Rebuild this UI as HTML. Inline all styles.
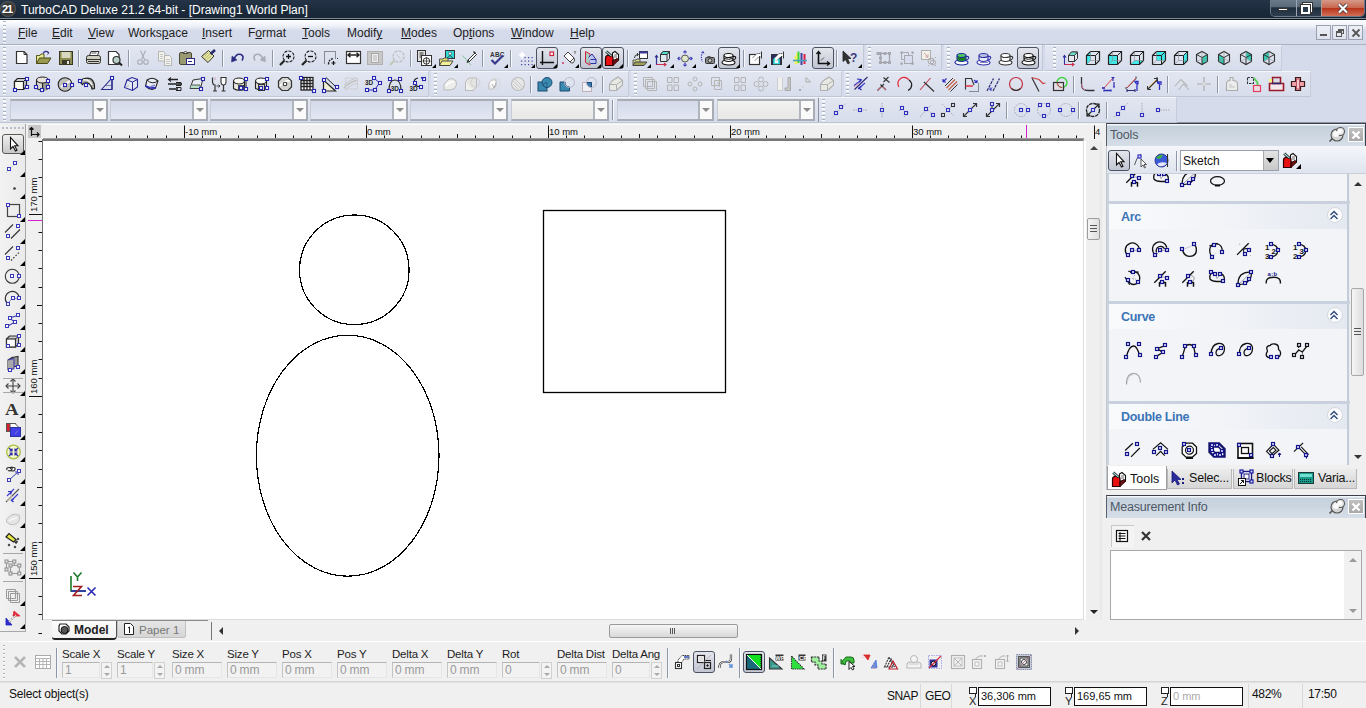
<!DOCTYPE html>
<html><head><meta charset="utf-8"><style>*{margin:0;padding:0;box-sizing:border-box}
html,body{width:1366px;height:708px;overflow:hidden;background:#f0f0f0;font-family:"Liberation Sans",sans-serif;font-size:12px;color:#000}
body{position:relative}
div,span,svg{position:absolute}
svg{overflow:visible}
.t{white-space:nowrap;line-height:1.15}
.menu{top:27px;font-size:12px;color:#1e1e1e}
.menu u{text-decoration:underline;text-underline-offset:1px}
.bar{background:linear-gradient(#e2e6f1,#d8ddec);border-top:1px solid #f5f6fb;border-bottom:1px solid #bfc6d6;border-right:1px solid #c6ccda}
.grip{width:3px;background:repeating-linear-gradient(#aab2c2 0 1.5px,#fcfdff 1.5px 3px,transparent 3px 4px);clip-path:polygon(0 0,100% 0,100% 100%,0 100%)}
.sep{width:2px;border-left:1px solid #8e97a8;border-right:1px solid #f8f9fd}
.press{border:1px solid #4c5262;border-radius:3px;background:linear-gradient(#e4e6ed,#c2c6d2)}
.combo{height:22px;border:2px solid #a8acb5;border-left:1px solid #c8ccd4;background:linear-gradient(#d3d9ea,#e3e7f3)}
.combo.l{background:linear-gradient(#f2f2f0,#e8e8e8)}
.cbtn{right:0;top:0;width:14px;height:18px;background:#fafafa;border-left:2px solid #b0b4bc}
.cbtn:after{content:"";position:absolute;left:2px;top:7px;border-left:4px solid transparent;border-right:4px solid transparent;border-top:4px solid #8c8c8c}
.tri{width:0;height:0;border-left:5px solid transparent;border-bottom:5px solid #000}
.rl{font-size:9.5px;color:#111;line-height:12px;margin-top:0.5px}
.sect{left:1107px;width:242px;background:#f2f4f8;border-left:2px solid #cdd4de;border-right:2px solid #c4ccd8}
.sh{left:0;top:0;width:238px;height:25px;background:linear-gradient(90deg,#f9fafc 0,#f2f4f8 45%,#e4e8f0 100%)}
.sh span{left:12px;top:6px;font-size:12.5px;font-weight:bold;color:#3b74b7;letter-spacing:-0.3px}
.cbut{left:218px;top:3px;width:16px;height:16px;border-radius:8px;background:#fbfcfd;border:1px solid #d4d8de}
.ptitle{background:linear-gradient(#f4f7fa 0,#f4f7fa 1px,#c4d0dc 2px,#d6dee8 100%);border-top:1px solid #3a3f48;border-left:1px solid #5a6068;border-right:1px solid #3a3f48}
.ptitle span{left:3px;top:4px;font-size:12.5px;color:#4e5866;letter-spacing:-0.2px}
.lbl{font-size:11.5px;color:#1e1e1e;top:648px;letter-spacing:-0.2px}
.inp{top:662px;height:16px;border:1px solid #e6e6e6;border-top-color:#b4b4b4;border-left-color:#c4c4c4;background:#f2f2f2;color:#9a9a9a;font-size:12px}
.inp span{left:2px;top:1px;letter-spacing:-0.2px}
.spin{top:662px;width:11px;height:17px;border:1px solid #d0d0d0;background:#f3f3f3}
</style></head><body>
<div style="left:0;top:0;width:1366px;height:20px;background:linear-gradient(#243446,#1b2a3b 60%,#172535);border-bottom:1px solid #0c141c"></div>
<div style="left:0;top:18px;width:1366px;height:1px;background:#7a8a98"></div>
<div style="left:0px;top:1px;width:16px;height:16px;border-radius:8px;background:radial-gradient(#2a2a2a 0,#3a3a3a 55%,#666 75%,#2a3040 100%)"></div>
<span class="t" style="left:2px;top:3px;font-size:11px;font-weight:bold;color:#fff;letter-spacing:-1.2px">21</span>
<span class="t" style="left:21px;top:4px;font-size:12px;color:#fff">TurboCAD Deluxe 21.2 64-bit - [Drawing1 World Plan]</span>
<div style="left:1270px;top:-1px;width:95px;height:18px;border:1px solid #6c7888;border-top:none;border-radius:0 0 5px 5px;overflow:hidden"><div style="left:0;top:0;width:25px;height:17px;background:linear-gradient(#6e7e8c,#5a6a78 45%,#1e2e3e 52%,#2e3e50)"></div><div style="left:25px;top:0;width:25px;height:17px;border-left:1px solid #9aa6b2;background:linear-gradient(#6e7e8c,#5a6a78 45%,#1e2e3e 52%,#2e3e50)"></div><div style="left:50px;top:0;width:44px;height:17px;border-left:1px solid #b0a09a;background:linear-gradient(#d8a090,#c86850 50%,#b8341a 55%,#d07058)"></div></div>
<div style="left:1278px;top:8px;width:10px;height:3px;background:#fff;border:1px solid #333"></div>
<div style="left:1303px;top:3px;width:9px;height:9px;border:2px solid #fff;box-shadow:0 0 0 1px #333"></div><div style="left:1301px;top:5px;width:9px;height:9px;border:2px solid #fff;background:#2a3a4a;box-shadow:0 0 0 1px #333"></div>
<svg style="left:1337px;top:3px" width="12" height="11" viewBox="0 0 12 11"><path d="M2 1.5L10 9.5M10 1.5L2 9.5" stroke="#333" stroke-width="3.6"/><path d="M2 1.5L10 9.5M10 1.5L2 9.5" stroke="#fff" stroke-width="2.2"/></svg>
<div style="left:0;top:20px;width:1366px;height:25px;background:linear-gradient(#fdfeff 0,#eef1f8 25%,#d5dbeb 45%,#d4daea 100%);border-bottom:1px solid #a9b0be"></div>
<span class="t menu" style="left:18px"><u>F</u>ile</span>
<span class="t menu" style="left:52px"><u>E</u>dit</span>
<span class="t menu" style="left:88px"><u>V</u>iew</span>
<span class="t menu" style="left:128px">Works<u>p</u>ace</span>
<span class="t menu" style="left:202px"><u>I</u>nsert</span>
<span class="t menu" style="left:248px">F<u>o</u>rmat</span>
<span class="t menu" style="left:302px"><u>T</u>ools</span>
<span class="t menu" style="left:347px">Modif<u>y</u></span>
<span class="t menu" style="left:401px"><u>M</u>odes</span>
<span class="t menu" style="left:453px">Op<u>t</u>ions</span>
<span class="t menu" style="left:511px"><u>W</u>indow</span>
<span class="t menu" style="left:570px"><u>H</u>elp</span>
<div class="grip" style="left:3px;top:21px;height:22px"></div>
<div style="left:1316px;top:25px;width:15px;height:15px;border:1px solid #9aa0ae;background:linear-gradient(#eef0f6,#dde2ee)"></div>
<div style="left:1332px;top:25px;width:15px;height:15px;border:1px solid #9aa0ae;background:linear-gradient(#eef0f6,#dde2ee)"></div>
<div style="left:1348px;top:25px;width:15px;height:15px;border:1px solid #9aa0ae;background:linear-gradient(#eef0f6,#dde2ee)"></div>
<div style="left:1320px;top:34px;width:7px;height:2px;background:#555"></div>
<div style="left:1338px;top:29px;width:6px;height:5px;border:1px solid #555;border-top-width:2px"></div><div style="left:1336px;top:31px;width:6px;height:6px;border:1px solid #555;border-top-width:2px;background:#e6e9f2"></div>
<svg style="left:1351px;top:28px" width="10" height="10" viewBox="0 0 10 10"><path d="M1.5 1.5L8.5 8.5M8.5 1.5L1.5 8.5" stroke="#555" stroke-width="1.8"/></svg>
<div style="left:0;top:45px;width:1366px;height:78px;background:#d6dbeb;border-bottom:1px solid #8d96a6"></div>
<div class="bar" style="left:0;top:45px;width:1282px;height:26px"></div>
<div class="bar" style="left:0;top:71px;width:429px;height:26px"></div>
<div class="bar" style="left:431px;top:71px;width:198px;height:26px"></div>
<div class="bar" style="left:631px;top:71px;width:211px;height:26px"></div>
<div class="bar" style="left:844px;top:71px;width:467px;height:26px"></div>
<div class="bar" style="left:0;top:97px;width:819px;height:26px"></div>
<div class="bar" style="left:819px;top:97px;width:358px;height:26px"></div>
<div class="grip" style="left:3px;top:47px;height:22px"></div>
<div class="grip" style="left:3px;top:73px;height:22px"></div>
<div class="grip" style="left:3px;top:99px;height:22px"></div>
<div class="press" style="left:536px;top:47px;width:22px;height:22px"></div>
<div class="press" style="left:580px;top:47px;width:22px;height:22px"></div>
<div class="press" style="left:602px;top:47px;width:22px;height:22px"></div>
<div class="press" style="left:718px;top:47px;width:22px;height:22px"></div>
<div class="press" style="left:812px;top:47px;width:22px;height:22px"></div>
<div class="press" style="left:1017px;top:47px;width:22px;height:22px"></div>
<div class="sep" style="left:78px;top:50px;height:17px"></div>
<div class="sep" style="left:128px;top:50px;height:17px"></div>
<div class="sep" style="left:222px;top:50px;height:17px"></div>
<div class="sep" style="left:272px;top:50px;height:17px"></div>
<div class="sep" style="left:410px;top:50px;height:17px"></div>
<div class="sep" style="left:482px;top:50px;height:17px"></div>
<div class="sep" style="left:510px;top:50px;height:17px"></div>
<div class="sep" style="left:627px;top:50px;height:17px"></div>
<div class="sep" style="left:743px;top:50px;height:17px"></div>
<div class="sep" style="left:836px;top:50px;height:17px"></div>
<svg style="left:13px;top:50px" width="16" height="16" viewBox="0 0 16 16"><path d="M3.5 1.5H11L14 4.5V13.5H3.5Z" fill="#fff" stroke="#333" stroke-width="1.2" /><path d="M11 1.5V4.5H14" fill="none" stroke="#333" stroke-width="1" /></svg>
<svg style="left:35px;top:50px" width="16" height="16" viewBox="0 0 16 16"><path d="M1.5 13.5V5.5H5L6 4H9V13.5Z" fill="#e8e890" stroke="#5a5a20" stroke-width="1" /><path d="M1.5 13.5L4.5 8H16L12.5 13.5Z" fill="#9a9a50" stroke="#4a4a18" stroke-width="1" /><path d="M8 3.5Q10 0 13.5 2.5" fill="none" stroke="#3a3a8a" stroke-width="1.3" /><path d="M11.5 1.5L14 2.8L12.5 4.5" fill="none" stroke="#3a3a8a" stroke-width="1" /></svg>
<svg style="left:58px;top:50px" width="16" height="16" viewBox="0 0 16 16"><rect x="1.5" y="1.5" width="13" height="13" fill="#8c8c50" stroke="#3a3a20"/><rect x="3.5" y="2" width="9" height="6" fill="#d8d8c0"/><rect x="4" y="10" width="8" height="4.5" fill="#3a3a28"/><rect x="9" y="11" width="2" height="3" fill="#e8e8d8"/></svg>
<svg style="left:85px;top:50px" width="16" height="16" viewBox="0 0 16 16"><path d="M4.5 5.5L6 1.5H14L12.5 5.5" fill="#fff" stroke="#333" stroke-width="1" /><rect x="1.5" y="5.5" width="14" height="8" rx="2" fill="#d0d0c0" stroke="#333"/><path d="M1.5 9.5H15.5M3 11.5H14" fill="none" stroke="#333" stroke-width="1" /><path d="M6.5 3H11.5" fill="none" stroke="#333" stroke-width="0.8" /></svg>
<svg style="left:107px;top:50px" width="16" height="16" viewBox="0 0 16 16"><path d="M1.5 1.5H9L12 4.5V14.5H1.5Z" fill="#fff" stroke="#333" stroke-width="1.2" /><circle cx="9.5" cy="10" r="3.5" fill="#b8d0c8" stroke="#333" stroke-width="1.2"/><path d="M12 12.5L15 15.5" fill="none" stroke="#222" stroke-width="2" /></svg>
<svg style="left:135px;top:50px" width="16" height="16" viewBox="0 0 16 16"><g stroke="#a8acb8" fill="none" stroke-width="1.1"><path d="M5.5 0.5L9.5 9.5M10.5 0.5L6.5 9.5" fill="none" stroke="#a8acb8" stroke-width="1.1" /><circle cx="5" cy="12" r="2.3"/><circle cx="11" cy="12" r="2.3"/></g></svg>
<svg style="left:157px;top:50px" width="16" height="16" viewBox="0 0 16 16"><path d="M1.5 1.5H6.5L8 3V11H1.5Z" fill="#f2f2ea" stroke="#b5b5b5" stroke-width="1" /><path d="M7.5 5.5H12.5L14.5 7.5V15.5H7.5Z" fill="#f2f2ea" stroke="#b5b5b5" stroke-width="1" /><path d="M3 4.5H6M3 6.5H6M3 8.5H6M9 9.5H13M9 11.5H13M9 13.5H13" fill="none" stroke="#c8c8c8" stroke-width="1" /></svg>
<svg style="left:179px;top:50px" width="16" height="16" viewBox="0 0 16 16"><rect x="0.5" y="2.5" width="12" height="12" rx="1.5" fill="#9a9a72" stroke="#4a4a30"/><path d="M4 3.5L6.5 1L9 3.5Z" fill="#f0f0d8" stroke="#444" stroke-width="1" /><rect x="7.5" y="8.5" width="8" height="6" fill="#fff" stroke="#2a2a80"/><path d="M9 11.5H13" fill="none" stroke="#2a2a80" stroke-width="1" /></svg>
<svg style="left:200px;top:50px" width="16" height="16" viewBox="0 0 16 16"><path d="M1.5 6.5L8.5 0.5L14 6L8 12.5Z" fill="#e8e8a0" stroke="#333" stroke-width="1" /><path d="M3.5 7L8.5 2.5M5 8.5L10 4M6.5 10L11.5 5.5" fill="none" stroke="#a8a870" stroke-width="0.8" /><path d="M10.5 4L15 0" fill="none" stroke="#2a2a6a" stroke-width="2.6" /></svg>
<svg style="left:230px;top:50px" width="16" height="16" viewBox="0 0 16 16"><path d="M4 9.5Q6 3 11 4.5Q14.5 6 12 10.5" fill="none" stroke="#2a2a80" stroke-width="1.6" /><path d="M1.5 12L2 6L7 10Z" fill="#2a2a80" stroke="#2a2a80" stroke-width="0.5" /></svg>
<svg style="left:251px;top:50px" width="16" height="16" viewBox="0 0 16 16"><path d="M12 9.5Q10 3 5 4.5Q1.5 6 4 10.5" fill="none" stroke="#a8acb8" stroke-width="1.6" /><path d="M14.5 12L14 6L9 10Z" fill="#a8acb8" stroke="#a8acb8" stroke-width="0.5" /></svg>
<svg style="left:279px;top:50px" width="16" height="16" viewBox="0 0 16 16"><circle cx="9.5" cy="6.5" r="5.5" fill="none" stroke="#222" stroke-width="1.1" stroke-dasharray="3 1.2"/><path d="M5.5 10.5L1 15" fill="none" stroke="#222" stroke-width="2.2" /><path d="M9.5 4V9M7 6.5H12" fill="none" stroke="#111" stroke-width="1.3" /></svg>
<svg style="left:301px;top:50px" width="16" height="16" viewBox="0 0 16 16"><circle cx="9.5" cy="6.5" r="5.5" fill="none" stroke="#222" stroke-width="1.1" stroke-dasharray="3 1.2"/><path d="M5.5 10.5L1 15" fill="none" stroke="#222" stroke-width="2.2" /><path d="M7 6.5H12" fill="none" stroke="#111" stroke-width="1.3" /></svg>
<svg style="left:323px;top:50px" width="16" height="16" viewBox="0 0 16 16"><path d="M1.5 13.5V1.5H12.5V9" fill="none" stroke="#333" stroke-width="1" stroke-dasharray="1 1"/><path d="M5.5 14.5Q5.5 9 11 8.5" fill="none" stroke="#222" stroke-width="1.4" stroke-dasharray="2 1"/><path d="M10.5 11V15M8.5 13H12.5" fill="none" stroke="#111" stroke-width="1.2" /><rect x="14" y="8" width="1" height="1" fill="#333"/></svg>
<svg style="left:345px;top:50px" width="16" height="16" viewBox="0 0 16 16"><rect x="1.5" y="1.5" width="14" height="12" fill="#fff" stroke="#333" stroke-width="1.2"/><path d="M3 5H14M5.5 2.8L3 5L5.5 7.2M11.5 2.8L14 5L11.5 7.2" fill="none" stroke="#222" stroke-width="1.4" /></svg>
<svg style="left:367px;top:50px" width="16" height="16" viewBox="0 0 16 16"><rect x="0.5" y="1.5" width="15" height="13" fill="#c8c8c8" stroke="#b0b0b0"/><rect x="4.5" y="3.5" width="7" height="9" fill="#ececec" stroke="#aaa"/><path d="M6 6H10M6 8H10M6 10H10" fill="none" stroke="#aaa" stroke-width="0.8" /></svg>
<svg style="left:389px;top:50px" width="16" height="16" viewBox="0 0 16 16"><circle cx="9.5" cy="6.5" r="5.5" fill="none" stroke="#b8b8b8" stroke-width="1.1" stroke-dasharray="3 1.2"/><path d="M5.5 10.5L1 15" fill="none" stroke="#c0c8b8" stroke-width="2" /><path d="M7.5 4.5L11.5 8.5" fill="none" stroke="#c0c0c0" stroke-width="1" /></svg>
<svg style="left:417px;top:50px" width="16" height="16" viewBox="0 0 16 16"><rect x="0.5" y="0.5" width="8" height="11" fill="#e0e0e0" stroke="#333"/><path d="M2.5 3H6.5M2.5 5H6.5M2.5 7H6.5" fill="none" stroke="#333" stroke-width="1" /><rect x="4.5" y="5.5" width="10" height="10" fill="#fff" stroke="#333"/><circle cx="9.5" cy="11" r="3.2" fill="none" stroke="#333"/><path d="M9.5 7V15M5.5 11H13.5" fill="none" stroke="#333" stroke-width="0.8" /></svg>
<svg style="left:439px;top:50px" width="16" height="16" viewBox="0 0 16 16"><rect x="6.5" y="0.5" width="9" height="8" fill="#30d8d8" stroke="#333"/><circle cx="11" cy="3.5" r="1.5" fill="#fff" stroke="#333" stroke-width="0.6"/><path d="M8 8L11 5.5L14 8" fill="none" stroke="#333" stroke-width="0.8" /><path d="M0.5 15.5V9H4L5 8H9V15.5Z" fill="#e8e070" stroke="#555" stroke-width="1" /><path d="M0.5 15.5L3 11H14L11 15.5Z" fill="#f4f098" stroke="#444" stroke-width="1" /></svg>
<svg style="left:461px;top:50px" width="16" height="16" viewBox="0 0 16 16"><path d="M1.5 5.5L10 15" fill="none" stroke="#80c090" stroke-width="1" /><path d="M7 10L14 3L15.5 4.5L8.5 11.5Z" fill="#fff" stroke="#333" stroke-width="1" /><path d="M7 10L6 12.5L8.5 11.5Z" fill="#333" stroke="#333" stroke-width="0.8" /><path d="M12.5 1.5L14.5 3.5" fill="none" stroke="#333" stroke-width="1.5" /></svg>
<svg style="left:489px;top:50px" width="16" height="16" viewBox="0 0 16 16"><text x="1" y="6.5" font-family="Liberation Sans" font-weight="bold" font-size="6.5" fill="#333" letter-spacing="0.2">ABC</text><path d="M2.5 10L6 13.5L14 5.5" fill="none" stroke="#3a3a8a" stroke-width="2.2" /></svg>
<svg style="left:517px;top:50px" width="16" height="16" viewBox="0 0 16 16"><rect x="4" y="7" width="1.2" height="1.2" fill="#4040a0"/><rect x="4" y="10.5" width="1.2" height="1.2" fill="#4040a0"/><rect x="4" y="14" width="1.2" height="1.2" fill="#4040a0"/><rect x="7.5" y="7" width="1.2" height="1.2" fill="#4040a0"/><rect x="7.5" y="10.5" width="1.2" height="1.2" fill="#4040a0"/><rect x="7.5" y="14" width="1.2" height="1.2" fill="#4040a0"/><rect x="11" y="7" width="1.2" height="1.2" fill="#4040a0"/><rect x="11" y="10.5" width="1.2" height="1.2" fill="#4040a0"/><rect x="11" y="14" width="1.2" height="1.2" fill="#4040a0"/><rect x="14.5" y="7" width="1.2" height="1.2" fill="#4040a0"/><rect x="14.5" y="10.5" width="1.2" height="1.2" fill="#4040a0"/><rect x="14.5" y="14" width="1.2" height="1.2" fill="#4040a0"/><path d="M1 5H9M5 1V9" fill="none" stroke="#e8e8f8" stroke-width="2" /><path d="M2 5L5 2L8 5L5 8Z" fill="#fff" stroke="#f6f6fc" stroke-width="0.5" /></svg>
<svg style="left:539px;top:50px" width="16" height="16" viewBox="0 0 16 16"><path d="M3.5 1V15M1 12.5H15" fill="none" stroke="#111" stroke-width="1.4" /><path d="M5 4.5H13M5 6.5H13" fill="none" stroke="#c8d8e8" stroke-width="0.8" stroke-dasharray="1 1"/><rect x="11" y="2" width="3.5" height="3.5" fill="#fff" stroke="#d02040" stroke-width="1.2"/></svg>
<svg style="left:561px;top:50px" width="16" height="16" viewBox="0 0 16 16"><path d="M3 6L7 2L13 8L9 12Z" fill="#fff" stroke="#444" stroke-width="1" /><path d="M9 12L13 8Q14.5 10 12.5 12.5Q11 14 9 12" fill="#f4f4f4" stroke="#444" stroke-width="1" /><path d="M1 12L3 14M3 12L1 14" fill="none" stroke="#d04060" stroke-width="0.8" /><path d="M13 1L14 2.5L15 1M14 2.5V4" fill="none" stroke="#555" stroke-width="0.7" /></svg>
<svg style="left:583px;top:50px" width="16" height="16" viewBox="0 0 16 16"><path d="M2.5 1.5L7 4V15L2.5 12.5Z" fill="rgba(120,200,160,0.5)" stroke="#d02040" stroke-width="1" /><path d="M5.5 7.5L9 4L13 9.5V13.5H7.5" fill="#b8c8f0" stroke="#3030a0" stroke-width="1" /><path d="M7.5 9.5H13" fill="none" stroke="#3030a0" stroke-width="1" /></svg>
<svg style="left:605px;top:50px" width="16" height="16" viewBox="0 0 16 16"><path d="M7.5 3L10 1.5L13.5 4.5V10H7.5Z" fill="#fff" stroke="#111" stroke-width="1.1" /><path d="M9 5H12M9 7H12" fill="none" stroke="#444" stroke-width="0.8" /><path d="M0.5 15.5V8.5Q0.5 5.5 3.5 5.2H5.5Q8 5.5 8 8.5V15.5Z" fill="#e81010" stroke="#2a0000" stroke-width="1.2" /><path d="M8 15.5L13.8 10L12 8.5L8 11Z" fill="#701010" stroke="#2a0000" stroke-width="1" /><path d="M1.2 1.5L6.5 6.2" fill="none" stroke="#111" stroke-width="2.8" /><path d="M1.2 1.5L6.5 6.2" fill="none" stroke="#a8e8e8" stroke-width="1.1" /></svg>
<svg style="left:632px;top:50px" width="16" height="16" viewBox="0 0 16 16"><rect x="7.5" y="1.5" width="8" height="7" fill="#fff" stroke="#333"/><rect x="7.5" y="1.5" width="8" height="2" fill="#3a3aa0"/><path d="M1 15.5V10H4L5 9H8V15.5Z" fill="#d8d890" stroke="#555" stroke-width="1" /><path d="M1 15.5L3 12H15L12 15.5Z" fill="#a0a058" stroke="#444" stroke-width="1" /><path d="M2.5 8Q2.5 4.5 6 4.5" fill="none" stroke="#333" stroke-width="1" /><path d="M5 3L6.5 4.5L5 6" fill="none" stroke="#333" stroke-width="1" /></svg>
<svg style="left:654px;top:50px" width="16" height="16" viewBox="0 0 16 16"><path d="M6.5 4.5L9 1.5H15.5V8.5L13 11.5H6.5Z" fill="#e0e8f0" stroke="#333" stroke-width="1" /><path d="M6.5 4.5H13V11.5M13 4.5L15.5 1.5" fill="none" stroke="#333" stroke-width="1" /><path d="M6.5 4.5L9 1.5H15.5L13 4.5Z" fill="#50e0d0" stroke="#333" stroke-width="1" /><path d="M2.5 15V6M1 7.5L2.5 5.5L4 7.5" fill="none" stroke="#303090" stroke-width="1.2" /><path d="M2.5 14.5H12M10 13L12 14.5L10 16" fill="none" stroke="#d03050" stroke-width="1.2" /></svg>
<svg style="left:677px;top:50px" width="16" height="16" viewBox="0 0 16 16"><circle cx="8" cy="8.5" r="3.5" fill="#e0e8c8" stroke="#555"/><path d="M8 1V4M8 13V16M1 8.5H4M12 8.5H15" fill="none" stroke="#3a3ab8" stroke-width="1.4" stroke-dasharray="1.5 1"/><path d="M6.5 2.5L8 1L9.5 2.5M6.5 14.5L8 16L9.5 14.5M2.5 7L1 8.5L2.5 10M13.5 7L15 8.5L13.5 10" fill="none" stroke="#3a3ab8" stroke-width="1.2" /></svg>
<svg style="left:699px;top:50px" width="16" height="16" viewBox="0 0 16 16"><rect x="6.5" y="7.5" width="9" height="6" rx="1" fill="#888" stroke="#333"/><circle cx="11" cy="10.5" r="1.8" fill="#ddd" stroke="#333"/><rect x="8.5" y="6" width="3" height="2" fill="#555"/><path d="M4 2Q1 6 3.5 12" fill="none" stroke="#3a3ab8" stroke-width="1.1" stroke-dasharray="1.5 1"/><path d="M2.5 3L4 1.5L5 3.5" fill="none" stroke="#3a3ab8" stroke-width="1" /></svg>
<svg style="left:721px;top:50px" width="16" height="16" viewBox="0 0 16 16"><ellipse cx="7.5" cy="12.5" rx="6.5" ry="2.5" fill="#fff" stroke="#111" stroke-width="1.1"/><path d="M3 5.5V9Q3 11.5 7.5 11.5Q12 11.5 12 9V5.5" fill="#fff" stroke="#111" stroke-width="1.1" /><ellipse cx="7.5" cy="5.5" rx="4.5" ry="2" fill="#fff" stroke="#111" stroke-width="1.1"/><path d="M12 6.5Q15.5 6 14.5 8.5Q13.5 10 12 10" fill="none" stroke="#111" stroke-width="1.1" /><path d="M3 8.5Q7.5 10 12 8.5" fill="none" stroke="#111" stroke-width="1" /></svg>
<svg style="left:748px;top:50px" width="16" height="16" viewBox="0 0 16 16"><rect x="1.5" y="4.5" width="10" height="10" fill="#fff" stroke="#333" stroke-width="1.2"/><path d="M4.5 8L9 3.5H13.5V6.5H11L6.5 11" fill="#fff" stroke="#333" stroke-width="0.9" stroke-dasharray="1 0.7"/><path d="M13.5 1.5V8.5" fill="none" stroke="#333" stroke-width="1" /></svg>
<svg style="left:770px;top:50px" width="16" height="16" viewBox="0 0 16 16"><rect x="1.5" y="4.5" width="10" height="10" fill="#2a2a6a" stroke="#333"/><path d="M3 14.5V9L6.5 6L10 9V14.5Z" fill="#40e0e0" stroke="#333" stroke-width="0.5" /><rect x="5" y="10" width="3" height="3" fill="#fff"/><path d="M4.5 8L9 3.5H13.5V6.5H11L6.5 11" fill="#fff" stroke="#333" stroke-width="0.9" stroke-dasharray="1 0.7"/><path d="M13.5 1.5V8.5" fill="none" stroke="#333" stroke-width="1" /></svg>
<svg style="left:792px;top:50px" width="16" height="16" viewBox="0 0 16 16"><path d="M3.5 6V14M5 3V14" fill="none" stroke="#f0f060" stroke-width="2" /><path d="M6.5 1.5V13" fill="none" stroke="#40d040" stroke-width="2" /><path d="M9.5 3V15" fill="none" stroke="#4040a0" stroke-width="2" /><path d="M12.5 4V14" fill="none" stroke="#e02040" stroke-width="2" /><path d="M1 10.5H15" fill="none" stroke="#40a0c0" stroke-width="1.5" /></svg>
<svg style="left:815px;top:50px" width="16" height="16" viewBox="0 0 16 16"><path d="M3.5 2V13.5H14.5" fill="none" stroke="#111" stroke-width="1.6" /><path d="M1.5 4L3.5 1.5L5.5 4M12 11.5L14.5 13.5L12 15.5" fill="none" stroke="#111" stroke-width="1.4" /><path d="M6 10.5L9 7.5" fill="none" stroke="#333" stroke-width="0.8" /></svg>
<svg style="left:842px;top:50px" width="16" height="16" viewBox="0 0 16 16"><path d="M1 1V11.5L3.5 9.5L6 14L7.5 13L5.5 8.5H9Z" fill="#333" stroke="#222" stroke-width="0.8" /><text x="8" y="11.5" font-family="Liberation Sans" font-weight="bold" font-size="12" fill="#3a3a80">?</text></svg>
<svg style="left:877px;top:50px" width="16" height="16" viewBox="0 0 16 16"><path d="M3.5 3.5H12.5V12.5H3.5Z" fill="none" stroke="#a0a0a8" stroke-width="1.2" /><rect x="2.0" y="2.0" width="3" height="3" fill="#a8a8b0"/><rect x="11.0" y="2.0" width="3" height="3" fill="#a8a8b0"/><rect x="2.0" y="11.0" width="3" height="3" fill="#a8a8b0"/><rect x="11.0" y="11.0" width="3" height="3" fill="#a8a8b0"/><rect x="6.5" y="2.0" width="3" height="3" fill="#a8a8b0"/><rect x="2.0" y="6.5" width="3" height="3" fill="#a8a8b0"/><rect x="-0.5" y="2.0" width="3" height="3" fill="#a8a8b0"/><rect x="6.5" y="11.0" width="3" height="3" fill="#a8a8b0"/></svg>
<svg style="left:899px;top:50px" width="16" height="16" viewBox="0 0 16 16"><path d="M2.5 2.5H9.5V9.5H2.5Z" fill="none" stroke="#a8a8b0" stroke-width="1" /><rect x="5.5" y="5.5" width="8" height="8" fill="#d8dcec" stroke="#a8a8b0"/><rect x="1.5" y="12.5" width="2.2" height="2.2" fill="#a0a0a8"/><rect x="12.5" y="1.5" width="2.2" height="2.2" fill="#a0a0a8"/><rect x="12.5" y="12.5" width="2.2" height="2.2" fill="#a0a0a8"/><rect x="1.5" y="1.5" width="2.2" height="2.2" fill="#a0a0a8"/></svg>
<svg style="left:921px;top:50px" width="16" height="16" viewBox="0 0 16 16"><rect x="0.5" y="0.5" width="9" height="9" fill="#f0f0e8" stroke="#b0b0b0"/><path d="M3 3L7 7M4.5 7H7V4.5" fill="none" stroke="#d0a0a0" stroke-width="1" /><circle cx="10" cy="11" r="3" fill="none" stroke="#aaa"/><circle cx="12" cy="12.5" r="2.5" fill="none" stroke="#aaa"/><rect x="14" y="7" width="1" height="1" fill="#aaa"/><rect x="14" y="15" width="1" height="1" fill="#aaa"/><rect x="7" y="15" width="1" height="1" fill="#aaa"/></svg>
<svg style="left:954px;top:50px" width="16" height="16" viewBox="0 0 16 16"><ellipse cx="7.5" cy="12.5" rx="6.5" ry="2.5" fill="#fff" stroke="#1e2aa0" stroke-width="1.1"/><path d="M3 5.5V9Q3 11.5 7.5 11.5Q12 11.5 12 9V5.5" fill="#1a9a2a" stroke="#1e2aa0" stroke-width="1.1" /><ellipse cx="7.5" cy="5.5" rx="4.5" ry="2" fill="#50c860" stroke="#1e2aa0" stroke-width="1.1"/><path d="M12 6.5Q15.5 6 14.5 8.5Q13.5 10 12 10" fill="none" stroke="#1e2aa0" stroke-width="1.1" /><path d="M4 7Q6 11 11 8" fill="none" stroke="#1a7a1a" stroke-width="2" /></svg>
<svg style="left:976px;top:50px" width="16" height="16" viewBox="0 0 16 16"><ellipse cx="7.5" cy="12.5" rx="6.5" ry="2.5" fill="#fff" stroke="#3030a8" stroke-width="1.1"/><path d="M3 5.5V9Q3 11.5 7.5 11.5Q12 11.5 12 9V5.5" fill="#e8ecf8" stroke="#3030a8" stroke-width="1.1" /><ellipse cx="7.5" cy="5.5" rx="4.5" ry="2" fill="#b8c0e0" stroke="#3030a8" stroke-width="1.1"/><path d="M12 6.5Q15.5 6 14.5 8.5Q13.5 10 12 10" fill="none" stroke="#3030a8" stroke-width="1.1" /><path d="M4 12.5H12" fill="none" stroke="#8888c8" stroke-width="1" /></svg>
<svg style="left:998px;top:50px" width="16" height="16" viewBox="0 0 16 16"><ellipse cx="7.5" cy="12.5" rx="6.5" ry="2.5" fill="#fff" stroke="#333" stroke-width="1.1"/><path d="M3 5.5V9Q3 11.5 7.5 11.5Q12 11.5 12 9V5.5" fill="#fff" stroke="#333" stroke-width="1.1" /><ellipse cx="7.5" cy="5.5" rx="4.5" ry="2" fill="#fff" stroke="#333" stroke-width="1.1"/><path d="M12 6.5Q15.5 6 14.5 8.5Q13.5 10 12 10" fill="none" stroke="#333" stroke-width="1.1" /></svg>
<svg style="left:1021px;top:50px" width="16" height="16" viewBox="0 0 16 16"><ellipse cx="7.5" cy="12.5" rx="6.5" ry="2.5" fill="#fff" stroke="#111" stroke-width="1.1"/><path d="M3 5.5V9Q3 11.5 7.5 11.5Q12 11.5 12 9V5.5" fill="#fff" stroke="#111" stroke-width="1.1" /><ellipse cx="7.5" cy="5.5" rx="4.5" ry="2" fill="#fff" stroke="#111" stroke-width="1.1"/><path d="M12 6.5Q15.5 6 14.5 8.5Q13.5 10 12 10" fill="none" stroke="#111" stroke-width="1.1" /><path d="M3 8.5Q7.5 10 12 8.5" fill="none" stroke="#111" stroke-width="1" /></svg>
<svg style="left:1062px;top:50px" width="16" height="16" viewBox="0 0 16 16"><path d="M6.5 5.5L9.5 2H15.5V8.5L12.5 11.5H6.5Z" fill="#e8e8f0" stroke="#333" stroke-width="1" /><path d="M6.5 5.5H12.5V11.5M12.5 5.5L15.5 2" fill="none" stroke="#333" stroke-width="1" /><path d="M6.5 5.5L9.5 2H15.5L12.5 5.5Z" fill="#70e0d0" stroke="#333" stroke-width="0.8" /><path d="M2.5 15V6M1 7.5L2.5 5.5L4 7.5" fill="none" stroke="#3030a0" stroke-width="1.1" /><path d="M2.5 14.5H12M10 13L12 14.5L10 16" fill="none" stroke="#d03050" stroke-width="1.1" /></svg>
<svg style="left:1085px;top:50px" width="16" height="16" viewBox="0 0 16 16"><path d="M1.5 5.5L5.5 1.5V10.5L1.5 14.5Z" fill="#40e8e8" stroke="none" stroke-width="0" /><path d="M1.5 5.5L5.5 1.5H14.5V10.5L10.5 14.5H1.5Z" fill="none" stroke="#222" stroke-width="1.2" /><path d="M1.5 5.5H10.5V14.5M10.5 5.5L14.5 1.5" fill="none" stroke="#222" stroke-width="1" /><path d="M1.5 14.5L5.5 10.5H14.5M5.5 10.5V1.5" fill="none" stroke="#888" stroke-width="0.6" /></svg>
<svg style="left:1107px;top:50px" width="16" height="16" viewBox="0 0 16 16"><path d="M1.5 5.5H10.5V14.5H1.5Z" fill="#40e8e8" stroke="none" stroke-width="0" /><path d="M1.5 5.5L5.5 1.5H14.5V10.5L10.5 14.5H1.5Z" fill="none" stroke="#222" stroke-width="1.2" /><path d="M1.5 5.5H10.5V14.5M10.5 5.5L14.5 1.5" fill="none" stroke="#222" stroke-width="1" /><path d="M1.5 14.5L5.5 10.5H14.5M5.5 10.5V1.5" fill="none" stroke="#888" stroke-width="0.6" /></svg>
<svg style="left:1129px;top:50px" width="16" height="16" viewBox="0 0 16 16"><path d="M1.5 14.5L5.5 10.5H14.5L10.5 14.5Z" fill="#40e8e8" stroke="none" stroke-width="0" /><path d="M1.5 5.5L5.5 1.5H14.5V10.5L10.5 14.5H1.5Z" fill="none" stroke="#222" stroke-width="1.2" /><path d="M1.5 5.5H10.5V14.5M10.5 5.5L14.5 1.5" fill="none" stroke="#222" stroke-width="1" /><path d="M1.5 14.5L5.5 10.5H14.5M5.5 10.5V1.5" fill="none" stroke="#888" stroke-width="0.6" /></svg>
<svg style="left:1151px;top:50px" width="16" height="16" viewBox="0 0 16 16"><path d="M5.5 1.5H14.5V10.5H5.5Z" fill="#40e8e8" stroke="none" stroke-width="0" /><path d="M1.5 5.5L5.5 1.5H14.5V10.5L10.5 14.5H1.5Z" fill="none" stroke="#222" stroke-width="1.2" /><path d="M1.5 5.5H10.5V14.5M10.5 5.5L14.5 1.5" fill="none" stroke="#222" stroke-width="1" /><path d="M1.5 14.5L5.5 10.5H14.5M5.5 10.5V1.5" fill="none" stroke="#888" stroke-width="0.6" /></svg>
<svg style="left:1173px;top:50px" width="16" height="16" viewBox="0 0 16 16"><path d="M10.5 5.5L14.5 1.5V10.5L10.5 14.5Z" fill="#40e8e8" stroke="none" stroke-width="0" /><path d="M1.5 5.5L5.5 1.5H14.5V10.5L10.5 14.5H1.5Z" fill="none" stroke="#222" stroke-width="1.2" /><path d="M1.5 5.5H10.5V14.5M10.5 5.5L14.5 1.5" fill="none" stroke="#222" stroke-width="1" /><path d="M1.5 14.5L5.5 10.5H14.5M5.5 10.5V1.5" fill="none" stroke="#888" stroke-width="0.6" /></svg>
<svg style="left:1194px;top:50px" width="16" height="16" viewBox="0 0 16 16"><g transform="translate(1,0)"><path d="M7 7.5L12.5 4.5V11.5L7 14.5Z" fill="#38c8b0" stroke="none" stroke-width="0" /><path d="M1.5 4.5L7 1.5L12.5 4.5V11.5L7 14.5L1.5 11.5Z" fill="none" stroke="#333" stroke-width="1.1" /><path d="M1.5 4.5L7 7.5L12.5 4.5M7 7.5V15" fill="none" stroke="#333" stroke-width="1" /><path d="M7 1.5V7.5M1.5 11.5L7 8.5L12.5 11.5" fill="none" stroke="#999" stroke-width="0.6" /></g></svg>
<svg style="left:1216px;top:50px" width="16" height="16" viewBox="0 0 16 16"><g transform="translate(1,0)"><path d="M1.5 4.5L7 7.5V14.5L1.5 11.5Z" fill="#38c8b0" stroke="none" stroke-width="0" /><path d="M1.5 4.5L7 1.5L12.5 4.5V11.5L7 14.5L1.5 11.5Z" fill="none" stroke="#333" stroke-width="1.1" /><path d="M1.5 4.5L7 7.5L12.5 4.5M7 7.5V15" fill="none" stroke="#333" stroke-width="1" /><path d="M7 1.5V7.5M1.5 11.5L7 8.5L12.5 11.5" fill="none" stroke="#999" stroke-width="0.6" /></g></svg>
<svg style="left:1238px;top:50px" width="16" height="16" viewBox="0 0 16 16"><g transform="translate(1,0)"><path d="M7 1.5L12.5 4.5V11.5L7 8.5Z" fill="#38c8b0" stroke="none" stroke-width="0" /><path d="M1.5 4.5L7 1.5L12.5 4.5V11.5L7 14.5L1.5 11.5Z" fill="none" stroke="#333" stroke-width="1.1" /><path d="M1.5 4.5L7 7.5L12.5 4.5M7 7.5V15" fill="none" stroke="#333" stroke-width="1" /><path d="M7 1.5V7.5M1.5 11.5L7 8.5L12.5 11.5" fill="none" stroke="#999" stroke-width="0.6" /></g></svg>
<svg style="left:1261px;top:50px" width="16" height="16" viewBox="0 0 16 16"><g transform="translate(1,0)"><path d="M1.5 4.5L7 1.5V8.5L1.5 11.5Z" fill="#38c8b0" stroke="none" stroke-width="0" /><path d="M1.5 4.5L7 1.5L12.5 4.5V11.5L7 14.5L1.5 11.5Z" fill="none" stroke="#333" stroke-width="1.1" /><path d="M1.5 4.5L7 7.5L12.5 4.5M7 7.5V15" fill="none" stroke="#333" stroke-width="1" /><path d="M7 1.5V7.5M1.5 11.5L7 8.5L12.5 11.5" fill="none" stroke="#999" stroke-width="0.6" /></g></svg>
<div class="tri" style="left:432px;top:64px;border-left-width:4px;border-bottom-width:4px"></div>
<div class="tri" style="left:454px;top:64px;border-left-width:4px;border-bottom-width:4px"></div>
<div class="tri" style="left:504px;top:64px;border-left-width:4px;border-bottom-width:4px"></div>
<div class="tri" style="left:531px;top:64px;border-left-width:4px;border-bottom-width:4px"></div>
<div class="tri" style="left:553px;top:64px;border-left-width:4px;border-bottom-width:4px"></div>
<div class="tri" style="left:575px;top:64px;border-left-width:4px;border-bottom-width:4px"></div>
<div class="tri" style="left:597px;top:64px;border-left-width:4px;border-bottom-width:4px"></div>
<div class="tri" style="left:619px;top:64px;border-left-width:4px;border-bottom-width:4px"></div>
<div class="tri" style="left:647px;top:64px;border-left-width:4px;border-bottom-width:4px"></div>
<div class="tri" style="left:670px;top:64px;border-left-width:4px;border-bottom-width:4px"></div>
<div class="tri" style="left:692px;top:64px;border-left-width:4px;border-bottom-width:4px"></div>
<div class="tri" style="left:713px;top:64px;border-left-width:4px;border-bottom-width:4px"></div>
<div class="tri" style="left:736px;top:64px;border-left-width:4px;border-bottom-width:4px"></div>
<div class="tri" style="left:763px;top:64px;border-left-width:4px;border-bottom-width:4px"></div>
<div class="tri" style="left:786px;top:64px;border-left-width:4px;border-bottom-width:4px"></div>
<div class="tri" style="left:858px;top:64px;border-left-width:4px;border-bottom-width:4px"></div>
<div class="grip" style="left:868px;top:47px;height:22px"></div>
<div class="grip" style="left:947px;top:47px;height:22px"></div>
<div class="grip" style="left:1053px;top:47px;height:22px"></div>
<div style="left:863px;top:45px;width:1px;height:26px;background:#c2c8d6"></div><div style="left:864px;top:45px;width:2px;height:26px;background:#d6dbeb"></div>
<div style="left:941px;top:45px;width:1px;height:26px;background:#c2c8d6"></div><div style="left:942px;top:45px;width:2px;height:26px;background:#d6dbeb"></div>
<div style="left:1042px;top:45px;width:1px;height:26px;background:#c2c8d6"></div><div style="left:1043px;top:45px;width:2px;height:26px;background:#d6dbeb"></div>
<div class="sep" style="left:530px;top:76px;height:17px"></div>
<div class="sep" style="left:602px;top:76px;height:17px"></div>
<div class="sep" style="left:1073px;top:76px;height:17px"></div>
<div class="sep" style="left:1167px;top:76px;height:17px"></div>
<div class="sep" style="left:1217px;top:76px;height:17px"></div>
<div class="grip" style="left:434px;top:73px;height:22px"></div>
<div class="grip" style="left:634px;top:73px;height:22px"></div>
<div class="grip" style="left:846px;top:73px;height:22px"></div>
<svg style="left:13px;top:76px" width="16" height="16" viewBox="0 0 16 16"><path d="M1.5 5.5L4.5 2.5H13.5V10.5L10.5 13.5H1.5Z" fill="#c8ccd0" stroke="#222" stroke-width="1.2" /><path d="M1.5 5.5H10.5V13.5H1.5Z" fill="#fbfbf0" stroke="#222" stroke-width="1.2" /><path d="M10.5 5.5L13.5 2.5" fill="none" stroke="#222" stroke-width="1" /><rect x="0.5" y="12.5" width="3" height="3" fill="#fff" stroke="#2626b0" stroke-width="1.1"/><rect x="12.5" y="1.5" width="3" height="3" fill="#fff" stroke="#2626b0" stroke-width="1.1"/><rect x="12.5" y="9.5" width="3" height="3" fill="#fff" stroke="#2626b0" stroke-width="1.1"/></svg>
<svg style="left:34px;top:76px" width="16" height="16" viewBox="0 0 16 16"><path d="M2.5 4V12.5Q8.5 16 14.5 12.5V4" fill="#d8d8d0" stroke="#222" stroke-width="1.1" /><path d="M8.5 7V14.5Q12 14.5 14.5 12.5V4Q12 7 8.5 7Z" fill="#9a9a90" stroke="none" stroke-width="0" /><ellipse cx="8.5" cy="4" rx="6" ry="3" fill="#e8e4dc" stroke="#222" stroke-width="1.1"/><path d="M8.5 7V14.5" fill="none" stroke="#222" stroke-width="1.1" /><rect x="0.5" y="9.5" width="3" height="3" fill="#fff" stroke="#2626b0" stroke-width="1.1"/><rect x="6.5" y="12.5" width="3" height="3" fill="#fff" stroke="#2626b0" stroke-width="1.1"/><rect x="12.5" y="3.5" width="3" height="3" fill="#fff" stroke="#2626b0" stroke-width="1.1"/><rect x="12.5" y="9.5" width="3" height="3" fill="#fff" stroke="#2626b0" stroke-width="1.1"/></svg>
<svg style="left:57px;top:76px" width="16" height="16" viewBox="0 0 16 16"><circle cx="8" cy="8.5" r="6.8" fill="#c0c0b8" stroke="#222" stroke-width="1.1"/><path d="M4 11Q8 8 13 5" fill="none" stroke="#f4f4f4" stroke-width="2.5" /><rect x="6.5" y="7.5" width="3" height="3" fill="#fff" stroke="#2626b0" stroke-width="1.1"/><rect x="13.5" y="7.5" width="3" height="3" fill="#fff" stroke="#2626b0" stroke-width="1.1"/></svg>
<svg style="left:79px;top:76px" width="16" height="16" viewBox="0 0 16 16"><path d="M0.5 5.5Q6 0.5 12 3Q16 6 15.5 12.5L13 13Q12 8 8.5 7Q5 6.5 3.5 8.5Z" fill="#a8a8a0" stroke="#222" stroke-width="1.2" /><path d="M4 4Q10 2.5 13 9" fill="none" stroke="#f4f4f4" stroke-width="1.6" /><rect x="-0.5" y="3.5" width="3" height="3" fill="#fff" stroke="#2626b0" stroke-width="1.1"/><rect x="5.5" y="7.5" width="3" height="3" fill="#fff" stroke="#2626b0" stroke-width="1.1"/></svg>
<svg style="left:101px;top:76px" width="16" height="16" viewBox="0 0 16 16"><path d="M0.5 13.5L11 2V13.5Z" fill="#d8e0f0" stroke="#2a2a8a" stroke-width="1.1" /><path d="M5 9.5H11" fill="none" stroke="#6a6aa0" stroke-width="0.8" /><path d="M11 2L11 13.5" fill="none" stroke="#2a2a8a" stroke-width="1.2" /><rect x="9.5" y="0.5" width="3" height="3" fill="#fff" stroke="#2626b0" stroke-width="1.1"/></svg>
<svg style="left:123px;top:76px" width="16" height="16" viewBox="0 0 16 16"><path d="M1.5 11.5L4 4L9 1.5L14.5 3.5V11L9.5 14.5Z" fill="#e4e8f0" stroke="#2a2a9a" stroke-width="1.1" /><path d="M4 4L9.5 6V14.5M9.5 6L14.5 3.5" fill="none" stroke="#2a2a9a" stroke-width="1" /><path d="M2 12L6 9" fill="none" stroke="#999" stroke-width="0.6" /></svg>
<svg style="left:144px;top:76px" width="16" height="16" viewBox="0 0 16 16"><path d="M3 4Q9 0 14 5L11.5 12Q7 15.5 1.5 10Z" fill="#e8ecf4" stroke="#222" stroke-width="1.1" /><path d="M3 4Q8 9 14 5" fill="none" stroke="#222" stroke-width="1" /><path d="M1.5 10Q6 12.5 11.5 12" fill="none" stroke="#3030c0" stroke-width="2" /><path d="M6 11L11 9" fill="none" stroke="#8888cc" stroke-width="1.5" /></svg>
<svg style="left:167px;top:76px" width="16" height="16" viewBox="0 0 16 16"><path d="M2 3.5H11M1 8H15M2 13H11" fill="none" stroke="#222" stroke-width="1.6" /><path d="M4 1.5L1.5 3.5L4 5.5" fill="none" stroke="#222" stroke-width="1.1" /><path d="M9 6.5H14V9.5H9M9 11.5H14V14.5H9" fill="none" stroke="#222" stroke-width="1" /></svg>
<svg style="left:189px;top:76px" width="16" height="16" viewBox="0 0 16 16"><path d="M1 12.5L4 4L14 2.5L11.5 12.5Z" fill="#e8ecf4" stroke="#333" stroke-width="1" /><path d="M3 9H11L11.5 12.5H1" fill="#b8e0c8" stroke="#333" stroke-width="0.8" /><rect x="12.5" y="1.5" width="3" height="3" fill="#fff" stroke="#2626b0" stroke-width="1.1"/><rect x="10.5" y="11.5" width="3" height="3" fill="#fff" stroke="#2626b0" stroke-width="1.1"/></svg>
<svg style="left:211px;top:76px" width="16" height="16" viewBox="0 0 16 16"><path d="M1.5 1.5V5Q1.5 9 4 9V15M2 15H6" fill="none" stroke="#333" stroke-width="1.2" /><path d="M4 1.5V4" fill="none" stroke="#c06080" stroke-width="1" stroke-dasharray="1 1"/><path d="M10 1.5H15V5.5Q15 9 12.5 9Q10 9 10 5.5Z" fill="#fff" stroke="#333" stroke-width="1.1" /><path d="M12.5 9V15M10.5 15H14.5" fill="none" stroke="#333" stroke-width="1.2" /><path d="M5.5 10H9M7.5 8.5L9 10L7.5 11.5" fill="none" stroke="#333" stroke-width="0.9" /></svg>
<svg style="left:232px;top:76px" width="16" height="16" viewBox="0 0 16 16"><path d="M1.5 5V12.5Q7 16 12.5 12.5V5" fill="#e8e8e0" stroke="#222" stroke-width="1.1" /><ellipse cx="7" cy="5" rx="5.5" ry="3" fill="#f8f8f0" stroke="#222" stroke-width="1.1"/><rect x="6.5" y="9.5" width="5" height="4.5" fill="#c8c8b8" stroke="#444"/><path d="M14 3V13" fill="none" stroke="#222" stroke-width="1" /><rect x="12.5" y="1.5" width="3" height="3" fill="#fff" stroke="#2626b0" stroke-width="1.1"/><rect x="12.5" y="11.5" width="3" height="3" fill="#fff" stroke="#2626b0" stroke-width="1.1"/><rect x="7.5" y="10.5" width="3" height="3" fill="#fff" stroke="#2626b0" stroke-width="1.1"/></svg>
<svg style="left:254px;top:76px" width="16" height="16" viewBox="0 0 16 16"><path d="M1.5 5V12.5Q7 15 12.5 12.5V5" fill="#e0e0d8" stroke="#222" stroke-width="1.1" /><ellipse cx="7" cy="5" rx="5.5" ry="3" fill="#f8f8f4" stroke="#222" stroke-width="1.1"/><rect x="4.5" y="8.5" width="6" height="6" fill="#d0d0c0" stroke="#333"/><path d="M12.5 3V12" fill="none" stroke="#222" stroke-width="1" /><rect x="11.5" y="1.5" width="3" height="3" fill="#fff" stroke="#2626b0" stroke-width="1.1"/><rect x="11.5" y="10.5" width="3" height="3" fill="#fff" stroke="#2626b0" stroke-width="1.1"/><rect x="5.5" y="10.5" width="3" height="3" fill="#fff" stroke="#2626b0" stroke-width="1.1"/></svg>
<svg style="left:277px;top:76px" width="16" height="16" viewBox="0 0 16 16"><path d="M5 1.5H11L14.5 5V11L11 14.5H5L1.5 11V5Z" fill="#d4d4d0" stroke="#333" stroke-width="1.2" /><path d="M3 10Q8 4 13 5" fill="none" stroke="#fff" stroke-width="1.5" /><circle cx="8" cy="8" r="1.8" fill="#fff" stroke="#333" stroke-width="1.1"/></svg>
<svg style="left:299px;top:76px" width="16" height="16" viewBox="0 0 16 16"><rect x="2" y="1.5" width="12" height="12.5" fill="#fff" stroke="#222" stroke-width="1.3"/><path d="M5 1.5V14M8 1.5V14M11 1.5V14M2 4.5H14M2 7.5H14M2 10.5H14" fill="none" stroke="#222" stroke-width="1.3" /><rect x="0.5" y="0.5" width="3" height="3" fill="#fff" stroke="#2626b0" stroke-width="1.1"/><rect x="13.5" y="13.5" width="3" height="3" fill="#fff" stroke="#2626b0" stroke-width="1.1"/></svg>
<svg style="left:322px;top:76px" width="16" height="16" viewBox="0 0 16 16"><path d="M1.5 4V15H13.5Z" fill="#f0f0d8" stroke="#222" stroke-width="1.2" /><path d="M4 1.5L13.5 10.5" fill="none" stroke="#222" stroke-width="1" /><rect x="0.5" y="2.5" width="3" height="3" fill="#fff" stroke="#2626b0" stroke-width="1.1"/><rect x="0.5" y="13.5" width="3" height="3" fill="#fff" stroke="#2626b0" stroke-width="1.1"/><rect x="13.5" y="9.5" width="3" height="3" fill="#fff" stroke="#2626b0" stroke-width="1.1"/></svg>
<svg style="left:343px;top:76px" width="16" height="16" viewBox="0 0 16 16"><path d="M1 12Q6 6 15 4" fill="none" stroke="#c0c0c0" stroke-width="1.5" /><path d="M2 14Q8 8 15 7M1 9Q6 4 13 2" fill="none" stroke="#c8c8c8" stroke-width="1" /><rect x="2.5" y="2" width="12" height="11" fill="none" stroke="#d0d0d4"/></svg>
<svg style="left:365px;top:76px" width="16" height="16" viewBox="0 0 16 16"><text x="0" y="9" font-family="Liberation Sans" font-weight="bold" font-size="7.5" fill="#222" transform="scale(0.85 1)">3D</text><path d="M9 2L14.5 7L9.5 14H2" fill="none" stroke="#2a2ab8" stroke-width="1" /><rect x="7.5" y="0.5" width="3" height="3" fill="#fff" stroke="#2626b0" stroke-width="1.1"/><rect x="13.5" y="5.5" width="3" height="3" fill="#fff" stroke="#2626b0" stroke-width="1.1"/><rect x="8.5" y="12.5" width="3" height="3" fill="#fff" stroke="#2626b0" stroke-width="1.1"/><rect x="0.5" y="12.5" width="3" height="3" fill="#fff" stroke="#2626b0" stroke-width="1.1"/></svg>
<svg style="left:387px;top:76px" width="16" height="16" viewBox="0 0 16 16"><path d="M2 14.5Q2 4 8 4Q14 4 14 14.5" fill="none" stroke="#222" stroke-width="1.1" /><text x="4.5" y="15.5" font-family="Liberation Sans" font-weight="bold" font-size="7.5" fill="#222" transform="scale(0.85 1)">3D</text><rect x="1.5" y="1.5" width="3" height="3" fill="#fff" stroke="#2626b0" stroke-width="1.1"/><rect x="11.5" y="1.5" width="3" height="3" fill="#fff" stroke="#2626b0" stroke-width="1.1"/><rect x="0.5" y="13.5" width="3" height="3" fill="#fff" stroke="#2626b0" stroke-width="1.1"/><rect x="12.5" y="13.5" width="3" height="3" fill="#fff" stroke="#2626b0" stroke-width="1.1"/></svg>
<svg style="left:409px;top:76px" width="16" height="16" viewBox="0 0 16 16"><path d="M9 2Q4 3 5.5 7.5Q7 11 11.5 10.5" fill="none" stroke="#222" stroke-width="1.1" /><text x="0.5" y="15.5" font-family="Liberation Sans" font-weight="bold" font-size="7.5" fill="#222" transform="scale(0.85 1)">3D</text><rect x="4.5" y="5.5" width="3" height="3" fill="#fff" stroke="#2626b0" stroke-width="1.1"/><rect x="10.5" y="9.5" width="3" height="3" fill="#fff" stroke="#2626b0" stroke-width="1.1"/><rect x="13.5" y="1.5" width="3" height="3" fill="#fff" stroke="#2626b0" stroke-width="1.1"/><path d="M12 1.5L14.5 2.5" fill="none" stroke="#2a2ab8" stroke-width="1.5" /></svg>
<svg style="left:442px;top:76px" width="16" height="16" viewBox="0 0 16 16"><path d="M2 12V8L7 3Q11 1.5 14 5Q15.5 9 13 12Q10 14 7 14H2Z" fill="#ececea" stroke="#bbb" stroke-width="1" /><path d="M4 10Q8 5 12 6" fill="none" stroke="#fff" stroke-width="1.5" /></svg>
<svg style="left:464px;top:76px" width="16" height="16" viewBox="0 0 16 16"><rect x="1.5" y="5.5" width="8" height="9" fill="#f0f0ee" stroke="#bbb"/><path d="M1.5 5.5L5 2H12.5V11L9.5 14.5" fill="#e4e4e2" stroke="#bbb" stroke-width="1" /><circle cx="11.5" cy="6.5" r="4.5" fill="none" stroke="#d0d0d0"/></svg>
<svg style="left:486px;top:76px" width="16" height="16" viewBox="0 0 16 16"><path d="M3 7L6 4H10V10L7 13H3Z" fill="#fff" stroke="#bbb" stroke-width="1" /><circle cx="9" cy="8" r="5.5" fill="none" stroke="#d8d8d8"/><path d="M6 8L8 12L10 7" fill="none" stroke="#aaa" stroke-width="1" /></svg>
<svg style="left:510px;top:76px" width="16" height="16" viewBox="0 0 16 16"><circle cx="8" cy="8" r="6.5" fill="#e8e8e8" stroke="#bbb" stroke-width="1.1"/><path d="M3.5 5L11 12.5M5 3L13 11M3 8L8 13" fill="none" stroke="#c4c4c4" stroke-width="1" /></svg>
<svg style="left:537px;top:76px" width="16" height="16" viewBox="0 0 16 16"><rect x="1" y="6" width="9" height="9" fill="#3a8ab0" stroke="#1a4a70"/><circle cx="10" cy="6.5" r="5" fill="#3a8ab0" stroke="#1a4a70"/><path d="M6 10Q6 6.5 10 6.5V11" fill="none" stroke="#1a4a70" stroke-width="0.6" /></svg>
<svg style="left:559px;top:76px" width="16" height="16" viewBox="0 0 16 16"><path d="M1 6H6Q6 11 10.5 11V15H1Z" fill="#3a8ab0" stroke="#1a4a70" stroke-width="1" /><circle cx="10.5" cy="6.5" r="5" fill="none" stroke="#b8b8c8"/></svg>
<svg style="left:581px;top:76px" width="16" height="16" viewBox="0 0 16 16"><rect x="1.5" y="6.5" width="9" height="9" fill="#eef0f6" stroke="#c0b0b8"/><path d="M6 6.5H10.5V11Q6 11 6 6.5Z" fill="#3a7ab8" stroke="#1a4a70" stroke-width="1" /><circle cx="10.5" cy="6.5" r="5" fill="none" stroke="#b8b8c8"/></svg>
<svg style="left:608px;top:76px" width="16" height="16" viewBox="0 0 16 16"><path d="M1.5 8.5V14.5H8.5L14.5 9V4.5L10 1L4 5Z" fill="#e8e8e4" stroke="#b0b0b0" stroke-width="1.1" /><path d="M1.5 8.5H8.5V14.5M8.5 8.5L14.5 4.5" fill="none" stroke="#b0b0b0" stroke-width="1" /></svg>
<svg style="left:642px;top:76px" width="16" height="16" viewBox="0 0 16 16"><path d="M1.5 1.5H10.5V10.5H1.5Z" fill="none" stroke="#b4b4b4" stroke-width="1" /><path d="M3.5 3.5H12.5V12.5H3.5Z" fill="none" stroke="#b4b4b4" stroke-width="1" /><path d="M5.5 5.5H14.5V14.5H5.5Z" fill="none" stroke="#b4b4b4" stroke-width="1" /></svg>
<svg style="left:665px;top:76px" width="16" height="16" viewBox="0 0 16 16"><path d="M2.5 1.5H7V6.5H2.5ZM9 1.5H13.5V6.5H9ZM2.5 9H7V14.5H2.5ZM9 9H13.5V14.5H9Z" fill="none" stroke="#b4b4b4" stroke-width="1" /></svg>
<svg style="left:687px;top:76px" width="16" height="16" viewBox="0 0 16 16"><g fill="none" stroke="#b4b4b4"><circle cx="8" cy="3" r="2"/><circle cx="3" cy="8" r="2"/><circle cx="13" cy="8" r="2"/><circle cx="8" cy="13" r="2"/></g></svg>
<svg style="left:710px;top:76px" width="16" height="16" viewBox="0 0 16 16"><path d="M1.5 1.5H9.5V9.5H1.5Z" fill="none" stroke="#b4b4b4" stroke-width="1" /><path d="M4.5 4.5H11.5V13.5H4.5Z" fill="none" stroke="#b4b4b4" stroke-width="1" /><path d="M7 7H9V11" fill="none" stroke="#b4b4b4" stroke-width="1" /></svg>
<svg style="left:732px;top:76px" width="16" height="16" viewBox="0 0 16 16"><path d="M2.5 1.5H7V6.5H2.5ZM9 1.5H13.5V6.5H9ZM2.5 9H7V14.5H2.5ZM9 9H13.5V14.5H9Z" fill="none" stroke="#b4b4b4" stroke-width="1" /></svg>
<svg style="left:753px;top:76px" width="16" height="16" viewBox="0 0 16 16"><g fill="none" stroke="#b4b4b4"><circle cx="8" cy="3.5" r="2.5"/><circle cx="3.5" cy="8" r="2.5"/><circle cx="12.5" cy="8" r="2.5"/><circle cx="8" cy="12.5" r="2.5"/></g></svg>
<svg style="left:776px;top:76px" width="16" height="16" viewBox="0 0 16 16"><path d="M1.5 1.5V14.5H6.5V1.5" fill="#f0f0f0" stroke="#ccc" stroke-width="1" /><path d="M9 14.5H14.5V1.5H12V12H9Z" fill="#c8c8c8" stroke="#aaa" stroke-width="1" /></svg>
<svg style="left:797px;top:76px" width="16" height="16" viewBox="0 0 16 16"><path d="M9 1.5L13.5 6H9Z" fill="none" stroke="#aaa" stroke-width="1" /><rect x="2" y="13" width="2" height="2" fill="#aaa"/><rect x="5" y="10" width="1.5" height="1.5" fill="#ccc"/><rect x="8" y="8" width="1.5" height="1.5" fill="#ddd"/></svg>
<svg style="left:819px;top:76px" width="16" height="16" viewBox="0 0 16 16"><path d="M1.5 8.5V14.5H8.5L14.5 9V4.5L10 1L4 5Z" fill="#e8e8e4" stroke="#b0b0b0" stroke-width="1.1" /><path d="M1.5 8.5H8.5V14.5M8.5 8.5L14.5 4.5" fill="none" stroke="#b0b0b0" stroke-width="1" /></svg>
<svg style="left:853px;top:76px" width="16" height="16" viewBox="0 0 16 16"><path d="M1.5 13.5L14.5 1" fill="none" stroke="#2a2a6a" stroke-width="1.1" /><path d="M1 9.5L9 3.5M5 13L12 7" fill="none" stroke="#3a3ad0" stroke-width="1.1" /><path d="M4 3L7.5 3.5L6.5 6.5M8.5 14L6 12L8.5 10.5" fill="none" stroke="#2a2ab8" stroke-width="1.2" /><path d="M1 11L6 7" fill="none" stroke="#e08080" stroke-width="0.8" /></svg>
<svg style="left:876px;top:76px" width="16" height="16" viewBox="0 0 16 16"><path d="M1.5 14.5L8 8M4.5 8.5L10 14M7.5 1.5L13.5 6.5M12.5 1L7.5 6" fill="none" stroke="#333" stroke-width="1.1" /><path d="M1.5 14.5L5 11M10 14L7 11" fill="none" stroke="#d05060" stroke-width="1" /></svg>
<svg style="left:897px;top:76px" width="16" height="16" viewBox="0 0 16 16"><path d="M2 11A6 6 0 0 1 12 4" fill="none" stroke="#e03040" stroke-width="1.3" /><path d="M12 4A6 6 0 0 1 11 14.5" fill="none" stroke="#222" stroke-width="1.3" /></svg>
<svg style="left:919px;top:76px" width="16" height="16" viewBox="0 0 16 16"><path d="M1 14L11.5 2" fill="none" stroke="#c04050" stroke-width="1.1" /><path d="M5 6L15 15.5" fill="none" stroke="#333" stroke-width="1.2" /></svg>
<svg style="left:942px;top:76px" width="16" height="16" viewBox="0 0 16 16"><path d="M4.5 12L13 3.5M6.5 14L15 5.5" fill="none" stroke="#c06040" stroke-width="1.1" /><path d="M8.5 15.5L15.5 8.5M3 10L11 2" fill="none" stroke="#333" stroke-width="1" /><path d="M1 6L4.5 2.5M1 6V3M1 6H4" fill="none" stroke="#3030c0" stroke-width="1.2" /></svg>
<svg style="left:964px;top:76px" width="16" height="16" viewBox="0 0 16 16"><path d="M1.5 13.5V2.5H7.5L10 9" fill="none" stroke="#333" stroke-width="1.1" /><path d="M1.5 10H9" fill="none" stroke="#e03040" stroke-width="1.5" /><path d="M5.5 15.5H14.5V7" fill="none" stroke="#333" stroke-width="1" stroke-dasharray="1 1"/><path d="M10 4L13 6.5M13 4V6.5H10.5" fill="none" stroke="#3030c0" stroke-width="1.1" /></svg>
<svg style="left:986px;top:76px" width="16" height="16" viewBox="0 0 16 16"><path d="M1 15L7.5 2.5M7 15L13.5 2.5" fill="none" stroke="#2a2a6a" stroke-width="1.2" stroke-dasharray="3 1"/><path d="M4 14L6 11.5M4 11.5V14H6" fill="none" stroke="#3030c0" stroke-width="1" /></svg>
<svg style="left:1008px;top:76px" width="16" height="16" viewBox="0 0 16 16"><circle cx="8" cy="8" r="6.5" fill="none" stroke="#c03040" stroke-width="1.2"/><path d="M3.5 12.5A6.5 6.5 0 0 0 12.5 12.5" fill="none" stroke="#333" stroke-width="1.2" /></svg>
<svg style="left:1030px;top:76px" width="16" height="16" viewBox="0 0 16 16"><path d="M2 2L9 15.5" fill="none" stroke="#333" stroke-width="1.2" /><path d="M1.5 1.5L9 3.5L13 7.5L15.5 7" fill="none" stroke="#d04040" stroke-width="1.2" /></svg>
<svg style="left:1052px;top:76px" width="16" height="16" viewBox="0 0 16 16"><circle cx="10" cy="6.5" r="5" fill="none" stroke="#40d040" stroke-width="1.4"/><rect x="1.5" y="6.5" width="10" height="8" fill="#f0d8e0" fill-opacity="0.5" stroke="#333" stroke-width="1.2"/><path d="M5.5 6.5A4.5 4.5 0 0 0 10 11.5" fill="none" stroke="#c03040" stroke-width="1" /></svg>
<svg style="left:1080px;top:76px" width="16" height="16" viewBox="0 0 16 16"><path d="M1.5 1V8Q1.5 14.5 8 14.5H14.5" fill="none" stroke="#333" stroke-width="1.3" /><path d="M1.5 8Q1.5 12 5 14" fill="none" stroke="#e080a0" stroke-width="1" /></svg>
<svg style="left:1101px;top:76px" width="16" height="16" viewBox="0 0 16 16"><path d="M1 12H3L12 2" fill="none" stroke="#e04040" stroke-width="1" /><path d="M1 12H4M3 14.5H10M3 13.5V15.5M10 13.5V15.5" fill="none" stroke="#2a2ab8" stroke-width="1.3" /><path d="M12 1.5V5M10.5 1.5H13.5M13 6V11M12 11H14" fill="none" stroke="#2a2ab8" stroke-width="1.2" /></svg>
<svg style="left:1124px;top:76px" width="16" height="16" viewBox="0 0 16 16"><path d="M1 12H3L12 2.5V0.5" fill="none" stroke="#333" stroke-width="1" /><path d="M3 12L12 2" fill="none" stroke="#e04040" stroke-width="0.8" /><path d="M3 14.5H11M3 13V16M11 13V16" fill="none" stroke="#2a2a6a" stroke-width="1.1" /><path d="M13 15V8.5Q13 6.5 11.5 7L11 5.5L14 5.5L14 8.5" fill="none" stroke="#3030c0" stroke-width="1.3" /></svg>
<svg style="left:1146px;top:76px" width="16" height="16" viewBox="0 0 16 16"><path d="M2 13L11 4" fill="none" stroke="#333" stroke-width="1.2" /><path d="M3 11L10 4" fill="none" stroke="#e0a040" stroke-width="0.8" /><path d="M1.5 10V13.5H5M8 2.5H11.5V6" fill="none" stroke="#333" stroke-width="1" /><path d="M11 1V6" fill="none" stroke="#333" stroke-width="1" /><path d="M13.5 14V8.5Q13.5 7 12 7.5L11.5 6L15 6L15 9" fill="none" stroke="#3030c0" stroke-width="1.3" /></svg>
<svg style="left:1174px;top:76px" width="16" height="16" viewBox="0 0 16 16"><path d="M1 10L7 3.5L13.5 10M4.5 14L9.5 8L15 14" fill="none" stroke="#b4b4b4" stroke-width="1.1" /></svg>
<svg style="left:1196px;top:76px" width="16" height="16" viewBox="0 0 16 16"><path d="M8 1V6M8 10V15M1 8H6M10 8H15" fill="none" stroke="#aaa" stroke-width="1.2" /><circle cx="8" cy="8" r="1.8" fill="none" stroke="#ccc"/></svg>
<svg style="left:1224px;top:76px" width="16" height="16" viewBox="0 0 16 16"><path d="M2.5 14.5V8Q2.5 4.5 6 4.5V1.5H9V4.5Q13.5 4.5 13.5 8V14.5Z" fill="#ececec" stroke="#aaa" stroke-width="1.1" /><path d="M5 11H11M5 9H8" fill="none" stroke="#bbb" stroke-width="0.8" /></svg>
<svg style="left:1246px;top:76px" width="16" height="16" viewBox="0 0 16 16"><path d="M1.5 1.5H7.5V7.5H1.5Z" fill="none" stroke="#333" stroke-width="1.1" stroke-dasharray="2.5 1"/><rect x="7.5" y="9.5" width="7" height="6" fill="#f4d8e0" stroke="#e04060" stroke-width="1.2"/><path d="M8 2L11.5 6.5V9" fill="none" stroke="#50d050" stroke-width="1.8" /></svg>
<svg style="left:1268px;top:76px" width="16" height="16" viewBox="0 0 16 16"><path d="M4.5 1.5H12.5V7.5H4.5Z" fill="#d8dce8" stroke="#9a1a2a" stroke-width="1.5" /><path d="M1.5 7.5H15.5V14.5H1.5Z" fill="#f4e8ec" stroke="#9a1a2a" stroke-width="1.6" /><path d="M4 7.5H13" fill="none" stroke="#2a2a6a" stroke-width="1.5" /><rect x="1" y="3" width="3" height="3" fill="#f0f080"/></svg>
<svg style="left:1290px;top:76px" width="16" height="16" viewBox="0 0 16 16"><path d="M5.5 1.5H10.5V5.5H14.5V10.5H10.5V14.5H5.5V10.5H1.5V5.5H5.5Z" fill="#f0a0a8" stroke="#3a1a1a" stroke-width="1.2" /><rect x="6.5" y="3" width="3" height="10" fill="#f8c8d0" stroke="#a03040" stroke-width="0.7"/></svg>
<div class="combo" style="left:10px;top:99px;width:98px"><div class="cbtn"></div></div>
<div class="combo" style="left:110px;top:99px;width:98px"><div class="cbtn"></div></div>
<div class="combo" style="left:210px;top:99px;width:98px"><div class="cbtn"></div></div>
<div class="combo" style="left:310px;top:99px;width:98px"><div class="cbtn"></div></div>
<div class="combo" style="left:410px;top:99px;width:98px"><div class="cbtn"></div></div>
<div class="combo l" style="left:511px;top:99px;width:98px"><div class="cbtn"></div></div>
<div class="combo" style="left:617px;top:99px;width:97px"><div class="cbtn"></div></div>
<div class="combo l" style="left:717px;top:99px;width:98px"><div class="cbtn"></div></div>
<div class="sep" style="left:612px;top:100px;height:20px"></div>
<div style="left:818px;top:98px;width:1px;height:24px;background:#8a92a2"></div>
<div class="grip" style="left:822px;top:99px;height:22px"></div>
<div class="sep" style="left:1006px;top:102px;height:17px"></div>
<div class="sep" style="left:1078px;top:102px;height:17px"></div>
<div class="sep" style="left:1106px;top:102px;height:17px"></div>
<svg style="left:831px;top:102px" width="16" height="16" viewBox="0 0 16 16"><path d="M1 15.5L15 1.5" fill="none" stroke="#9a9aaa" stroke-width="0.8" stroke-dasharray="1.5 1.5"/><rect x="3.5" y="9.5" width="3" height="3" fill="#e8e8ff" stroke="#3030b8" stroke-width="1.1"/><rect x="8.5" y="3.5" width="3" height="3" fill="#e8e8ff" stroke="#3030b8" stroke-width="1.1"/></svg>
<svg style="left:852px;top:102px" width="16" height="16" viewBox="0 0 16 16"><path d="M1 8H15" fill="none" stroke="#9a9aaa" stroke-width="0.8" stroke-dasharray="1.5 1"/><rect x="6.5" y="6.5" width="3" height="3" fill="#e8e8ff" stroke="#3030b8" stroke-width="1.1"/></svg>
<svg style="left:874px;top:102px" width="16" height="16" viewBox="0 0 16 16"><path d="M8 1V15" fill="none" stroke="#9a9aaa" stroke-width="0.8" stroke-dasharray="1.5 1"/><rect x="6.5" y="6.5" width="3" height="3" fill="#e8e8ff" stroke="#3030b8" stroke-width="1.1"/></svg>
<svg style="left:897px;top:102px" width="16" height="16" viewBox="0 0 16 16"><path d="M2 9L7 4M7 15L12 10" fill="none" stroke="#9a9aaa" stroke-width="0.8" stroke-dasharray="1.5 1"/><rect x="3.5" y="4.5" width="3" height="3" fill="#e8e8ff" stroke="#3030b8" stroke-width="1.1"/><rect x="7.5" y="9.5" width="3" height="3" fill="#e8e8ff" stroke="#3030b8" stroke-width="1.1"/></svg>
<svg style="left:919px;top:102px" width="16" height="16" viewBox="0 0 16 16"><path d="M1 15L8 7L14 13M8 7L12 3" fill="none" stroke="#9a9aaa" stroke-width="0.8" stroke-dasharray="1.5 1"/><rect x="5.5" y="5.5" width="3" height="3" fill="#e8e8ff" stroke="#3030b8" stroke-width="1.1"/><rect x="12.5" y="11.5" width="3" height="3" fill="#e8e8ff" stroke="#3030b8" stroke-width="1.1"/></svg>
<svg style="left:940px;top:102px" width="16" height="16" viewBox="0 0 16 16"><path d="M2 2L14 14M14 2L2 14" fill="none" stroke="#9a9aaa" stroke-width="0.8" stroke-dasharray="1.5 1"/><rect x="6.5" y="6.5" width="3" height="3" fill="#e8e8ff" stroke="#3030b8" stroke-width="1.1"/><rect x="11.5" y="1.5" width="3" height="3" fill="#e8e8ff" stroke="#333" stroke-width="1.1"/><rect x="1.5" y="11.5" width="3" height="3" fill="#e8e8ff" stroke="#333" stroke-width="1.1"/></svg>
<svg style="left:962px;top:102px" width="16" height="16" viewBox="0 0 16 16"><path d="M1.5 14.5L14.5 1.5" fill="none" stroke="#333" stroke-width="1.1" /><path d="M1.5 11V14.5H5M11 1.5H14.5V5" fill="none" stroke="#333" stroke-width="1.2" /><rect x="6.5" y="6.5" width="3" height="3" fill="#e8e8ff" stroke="#3030b8" stroke-width="1.1"/></svg>
<svg style="left:985px;top:102px" width="16" height="16" viewBox="0 0 16 16"><path d="M1.5 14.5L14.5 1.5" fill="none" stroke="#333" stroke-width="1.1" /><path d="M1.5 11V14.5H5M11 1.5H14.5V5" fill="none" stroke="#333" stroke-width="1.2" /><path d="M7 2V8" fill="none" stroke="#333" stroke-width="1.1" /><rect x="5.5" y="0.5" width="3" height="3" fill="#e8e8ff" stroke="#3030b8" stroke-width="1.1"/><rect x="5.5" y="6.5" width="3" height="3" fill="#e8e8ff" stroke="#3030b8" stroke-width="1.1"/></svg>
<svg style="left:1013px;top:102px" width="16" height="16" viewBox="0 0 16 16"><circle cx="8" cy="8" r="6.5" fill="none" stroke="#a0a0b0" stroke-dasharray="1.5 1.2"/><rect x="6.5" y="6.5" width="3" height="3" fill="#e8e8ff" stroke="#3030b8" stroke-width="1.1"/><rect x="13.5" y="6.5" width="3" height="3" fill="#e8e8ff" stroke="#3030b8" stroke-width="1.1"/></svg>
<svg style="left:1036px;top:102px" width="16" height="16" viewBox="0 0 16 16"><circle cx="8" cy="8" r="6.5" fill="none" stroke="#a0a0b0" stroke-dasharray="1.5 1.2"/><rect x="2.5" y="1.5" width="3" height="3" fill="#e8e8ff" stroke="#3030b8" stroke-width="1.1"/><rect x="10.5" y="1.5" width="3" height="3" fill="#e8e8ff" stroke="#3030b8" stroke-width="1.1"/><rect x="6.5" y="12.5" width="3" height="3" fill="#e8e8ff" stroke="#3030b8" stroke-width="1.1"/></svg>
<svg style="left:1058px;top:102px" width="16" height="16" viewBox="0 0 16 16"><circle cx="8" cy="8" r="6.5" fill="none" stroke="#a0a0b0" stroke-dasharray="1.5 1.2"/><rect x="0.5" y="6.5" width="3" height="3" fill="#e8e8ff" stroke="#3030b8" stroke-width="1.1"/><rect x="13.5" y="6.5" width="3" height="3" fill="#e8e8ff" stroke="#3030b8" stroke-width="1.1"/></svg>
<svg style="left:1085px;top:102px" width="16" height="16" viewBox="0 0 16 16"><circle cx="8" cy="8" r="6.5" fill="none" stroke="#222" stroke-width="1.3" stroke-dasharray="3.5 0.8"/><path d="M2 14L14 2" fill="none" stroke="#222" stroke-width="1.1" /><path d="M2 10.5V14H5.5M10.5 2H14V5.5" fill="none" stroke="#222" stroke-width="1.2" /><rect x="6.5" y="6.5" width="3" height="3" fill="#e8e8ff" stroke="#3030b8" stroke-width="1.1"/></svg>
<svg style="left:1113px;top:102px" width="16" height="16" viewBox="0 0 16 16"><path d="M1 15L15 1" fill="none" stroke="#9a9aaa" stroke-width="0.8" stroke-dasharray="1.5 1.5"/><rect x="3.5" y="10.5" width="3" height="3" fill="#e8e8ff" stroke="#3030b8" stroke-width="1.1"/><rect x="8.5" y="4.5" width="3" height="3" fill="#e8e8ff" stroke="#3030b8" stroke-width="1.1"/></svg>
<svg style="left:1134px;top:102px" width="16" height="16" viewBox="0 0 16 16"><path d="M8 1V13" fill="none" stroke="#9a9aaa" stroke-width="0.8" stroke-dasharray="1.5 1"/><rect x="6.5" y="11.5" width="3" height="3" fill="#e8e8ff" stroke="#3030b8" stroke-width="1.1"/></svg>
<svg style="left:1155px;top:102px" width="16" height="16" viewBox="0 0 16 16"><path d="M3 8H15" fill="none" stroke="#9a9aaa" stroke-width="0.8" stroke-dasharray="1.5 1"/><rect x="1.5" y="6.5" width="3" height="3" fill="#e8e8ff" stroke="#3030b8" stroke-width="1.1"/></svg>
<div style="left:0;top:124px;width:26px;height:508px;background:linear-gradient(90deg,#f2f2f2,#eaeaea);border-right:1px solid #a8a8a8;border-bottom:1px solid #a8a8a8"></div>
<div style="left:2px;top:127px;width:22px;height:2px;background:repeating-linear-gradient(90deg,#b8bcc8 0 2px,transparent 2px 4px)"></div>
<div style="left:2px;top:134px;width:22px;height:20px;border:1px solid #5a5a5a;border-radius:3px;background:linear-gradient(#f0f0f0,#c8c8c8)"></div>
<svg style="left:5px;top:136px" width="16" height="16" viewBox="0 0 16 16"><path d="M5.5 1.5V13L8 10.5L10.5 15L12 14.2L9.7 9.8H13Z" fill="#fff" stroke="#111" stroke-width="1.1" /></svg>
<svg style="left:5px;top:158px" width="16" height="16" viewBox="0 0 16 16"><path d="M1 15L14 2" fill="none" stroke="#b8c0a8" stroke-width="0.9" stroke-dasharray="1.5 1.5"/><rect x="2.5" y="9.5" width="3" height="3" fill="#f4f4ff" stroke="#3a3ab8" stroke-width="1"/><rect x="8.5" y="3.5" width="3" height="3" fill="#f4f4ff" stroke="#3a3ab8" stroke-width="1"/></svg>
<svg style="left:5px;top:180px" width="16" height="16" viewBox="0 0 16 16"><circle cx="9.5" cy="8.5" r="1.3" fill="#333"/></svg>
<svg style="left:5px;top:202px" width="16" height="16" viewBox="0 0 16 16"><rect x="2.5" y="2.5" width="12" height="12" fill="none" stroke="#444" stroke-width="1.2"/><rect x="1.5" y="1.5" width="3" height="3" fill="#f4f4ff" stroke="#3a3ab8" stroke-width="1"/><rect x="12.5" y="12.5" width="3" height="3" fill="#f4f4ff" stroke="#3a3ab8" stroke-width="1"/></svg>
<svg style="left:5px;top:224px" width="16" height="16" viewBox="0 0 16 16"><path d="M0 8.5L8 0.5M6 14.5L15 5.5" fill="none" stroke="#333" stroke-width="1.1" /><rect x="1.5" y="10.5" width="3" height="3" fill="#f4f4ff" stroke="#3a3ab8" stroke-width="1"/><rect x="11.5" y="0.5" width="3" height="3" fill="#f4f4ff" stroke="#3a3ab8" stroke-width="1"/></svg>
<svg style="left:5px;top:246px" width="16" height="16" viewBox="0 0 16 16"><path d="M0 8.5L8 0.5" fill="none" stroke="#333" stroke-width="1.1" /><path d="M6 14.5L14 6.5" fill="none" stroke="#333" stroke-width="1.1" stroke-dasharray="1.6 1.6"/><rect x="1.5" y="10.5" width="3" height="3" fill="#f4f4ff" stroke="#3a3ab8" stroke-width="1"/><rect x="11.5" y="0.5" width="3" height="3" fill="#f4f4ff" stroke="#3a3ab8" stroke-width="1"/></svg>
<svg style="left:5px;top:268px" width="16" height="16" viewBox="0 0 16 16"><circle cx="7.3" cy="8.3" r="7" fill="none" stroke="#333" stroke-width="1.1"/><rect x="5.5" y="6.5" width="3" height="3" fill="#f4f4ff" stroke="#3a3ab8" stroke-width="1"/><rect x="12.5" y="6.5" width="3" height="3" fill="#f4f4ff" stroke="#3a3ab8" stroke-width="1"/></svg>
<svg style="left:5px;top:290px" width="16" height="16" viewBox="0 0 16 16"><path d="M2.5 13.5A7 7 0 1 1 14.3 8.3" fill="none" stroke="#333" stroke-width="1.1" /><path d="M7.5 8.3H14.3M2.5 13.5L7.5 8.3" fill="none" stroke="#6060c0" stroke-width="0.8" /><rect x="6.5" y="6.5" width="3" height="3" fill="#f4f4ff" stroke="#3a3ab8" stroke-width="1"/><rect x="12.5" y="6.5" width="3" height="3" fill="#f4f4ff" stroke="#3a3ab8" stroke-width="1"/><rect x="1.5" y="12.5" width="3" height="3" fill="#f4f4ff" stroke="#3a3ab8" stroke-width="1"/></svg>
<svg style="left:5px;top:312px" width="16" height="16" viewBox="0 0 16 16"><path d="M2 14.4L9.6 10.2L4.5 6L12.5 3.4" fill="none" stroke="#3a3ab0" stroke-width="1.1" /><rect x="0.5" y="12.5" width="3" height="3" fill="#f4f4ff" stroke="#3a3ab8" stroke-width="1"/><rect x="8.5" y="8.5" width="3" height="3" fill="#f4f4ff" stroke="#3a3ab8" stroke-width="1"/><rect x="3.5" y="4.5" width="3" height="3" fill="#f4f4ff" stroke="#3a3ab8" stroke-width="1"/><rect x="11.5" y="1.5" width="3" height="3" fill="#f4f4ff" stroke="#3a3ab8" stroke-width="1"/></svg>
<svg style="left:5px;top:334px" width="16" height="16" viewBox="0 0 16 16"><path d="M1.5 5L4.5 2H13.5V10L10.5 13H1.5Z" fill="#c8c8c8" stroke="#333" stroke-width="1.2" /><rect x="1.5" y="5" width="9" height="8" fill="#fff" stroke="#333" stroke-width="1.2"/><path d="M10.5 5L13.5 2" fill="none" stroke="#333" stroke-width="1" /><rect x="1.5" y="10.5" width="3" height="3" fill="#f4f4ff" stroke="#3a3ab8" stroke-width="1"/><rect x="12.5" y="0.5" width="3" height="3" fill="#f4f4ff" stroke="#3a3ab8" stroke-width="1"/><rect x="12.5" y="9.5" width="3" height="3" fill="#f4f4ff" stroke="#3a3ab8" stroke-width="1"/></svg>
<svg style="left:5px;top:356px" width="16" height="16" viewBox="0 0 16 16"><path d="M3 4L7 1.5V11L3 13.5Z" fill="#e0e0e0" stroke="#333" stroke-width="1.1" /><path d="M7 1.5L13 0.5V10L7 11Z" fill="#9a9a9a" stroke="#333" stroke-width="1.1" /><path d="M3 4L9 2.5V13L3 13.5" fill="#a8a8a8" stroke="#3a3ab0" stroke-width="1" /><rect x="3.5" y="12.5" width="3" height="3" fill="#f4f4ff" stroke="#3a3ab8" stroke-width="1"/><rect x="11.5" y="9.5" width="3" height="3" fill="#f4f4ff" stroke="#3a3ab8" stroke-width="1"/></svg>
<svg style="left:5px;top:378px" width="16" height="16" viewBox="0 0 16 16"><path d="M8 1V15M1 8H15" fill="none" stroke="#444" stroke-width="1.1" /><path d="M5.5 3.5L8 1L10.5 3.5M5.5 12.5L8 15L10.5 12.5M3.5 5.5L1 8L3.5 10.5M12.5 5.5L15 8L12.5 10.5" fill="none" stroke="#444" stroke-width="1.1" /></svg>
<svg style="left:5px;top:400px" width="16" height="16" viewBox="0 0 16 16"><text x="0" y="15" font-family="Liberation Serif" font-weight="bold" font-size="18" fill="#333" transform="scale(1.05 0.9) translate(0 1.5)">A</text></svg>
<svg style="left:5px;top:422px" width="16" height="16" viewBox="0 0 16 16"><rect x="1.5" y="1.5" width="9" height="8" fill="#e02030" stroke="#555"/><path d="M5 1.5H10L13.5 5V9.5H5Z" fill="#fff" stroke="#555" stroke-width="1" /><rect x="5.5" y="5.5" width="10" height="9" fill="#4040e8" stroke="#3030a0"/><path d="M10 12L13 8.5" fill="none" stroke="#a080c0" stroke-width="0.8" /></svg>
<svg style="left:5px;top:444px" width="16" height="16" viewBox="0 0 16 16"><circle cx="8.5" cy="8" r="6.8" fill="#f8f8c8" stroke="#a8c040" stroke-width="1.3"/><path d="M4 4L7 7M7 4.5V7H4.5M13 4L10 7M10 4.5V7H12.5M4 12L7 9M4.5 9H7V11.5M13 12L10 9M12.5 9H10V11.5" fill="none" stroke="#2a2ab0" stroke-width="1.2" /></svg>
<svg style="left:5px;top:466px" width="16" height="16" viewBox="0 0 16 16"><g transform="translate(0,0)"><path d="M2 4Q1 1.5 4 1.5H6Q8 1.5 6.5 4Q5 5.5 3 4.5M5.5 3Q5 0.5 8 1.5H9Q11 2 9.5 4.5Q8 5.5 6 4.5" fill="none" stroke="#333" stroke-width="1.2" /></g><path d="M4 14L13 6" fill="none" stroke="#3a3ab0" stroke-width="1" /><path d="M10 6H13V9" fill="none" stroke="#3a3ab0" stroke-width="1" /><rect x="2.5" y="12.5" width="3" height="3" fill="#f4f4ff" stroke="#3a3ab8" stroke-width="1"/><rect x="12.5" y="3.5" width="3" height="3" fill="#f4f4ff" stroke="#3a3ab8" stroke-width="1"/></svg>
<svg style="left:5px;top:488px" width="16" height="16" viewBox="0 0 16 16"><path d="M1 14L14 1" fill="none" stroke="#555" stroke-width="1.1" /><path d="M2 8L9 1M6 13L13 6" fill="none" stroke="#3a3ad0" stroke-width="1.1" /><path d="M3 3.5L6.5 3.5L5.5 6.5M8.5 14L6.5 12L9 10.5" fill="none" stroke="#3030c0" stroke-width="1.2" /><path d="M2 13L7 8" fill="none" stroke="#d0c080" stroke-width="0.8" /></svg>
<svg style="left:5px;top:512px" width="16" height="16" viewBox="0 0 16 16"><path d="M1.5 10V7L6 3Q11 1 14.5 3.5Q16 8 12 11.5Q8 13.5 5 12.5Z" fill="#e4e4e4" stroke="#c0c0c0" stroke-width="1" /><path d="M4 9Q8 6 12 6" fill="none" stroke="#f8f8f8" stroke-width="1.5" /></svg>
<svg style="left:5px;top:532px" width="16" height="16" viewBox="0 0 16 16"><path d="M1 5L4 1.5L11 7.5L8.5 10Z" fill="#e8e840" stroke="#222" stroke-width="1.2" /><rect x="10" y="8.5" width="2.5" height="3" fill="#333" transform="rotate(40 11 10)"/><g fill="#333"><rect x="3" y="12" width="2" height="2" transform="rotate(45 4 13)"/><rect x="12" y="6" width="2" height="2" transform="rotate(45 13 7)"/><rect x="9" y="14" width="2" height="2" transform="rotate(45 10 15)"/></g></svg>
<svg style="left:5px;top:560px" width="16" height="16" viewBox="0 0 16 16"><path d="M1.5 1.5H9.3V5.5M1.5 1.5V9.5M5.5 5.5H14.3V13.5H5.5Z" fill="none" stroke="#999" stroke-width="1.1" /><rect x="0.0" y="0.0" width="3" height="3" fill="#e8e8e8" stroke="#8a8a8a"/><rect x="7.800000000000001" y="0.0" width="3" height="3" fill="#e8e8e8" stroke="#8a8a8a"/><rect x="4.0" y="4.0" width="3" height="3" fill="#e8e8e8" stroke="#8a8a8a"/><rect x="12.8" y="4.0" width="3" height="3" fill="#e8e8e8" stroke="#8a8a8a"/><rect x="4.0" y="12.0" width="3" height="3" fill="#e8e8e8" stroke="#8a8a8a"/><rect x="12.8" y="12.0" width="3" height="3" fill="#e8e8e8" stroke="#8a8a8a"/><rect x="0.0" y="8.0" width="3" height="3" fill="#e8e8e8" stroke="#8a8a8a"/></svg>
<svg style="left:5px;top:588px" width="16" height="16" viewBox="0 0 16 16"><path d="M1.5 1.5H10.5V10.5H1.5ZM3.5 3.5H12.5V12.5H3.5ZM5.5 5.5H14.5V14.5H5.5Z" fill="none" stroke="#9a9a9a" stroke-width="1" /></svg>
<svg style="left:5px;top:610px" width="16" height="16" viewBox="0 0 16 16"><path d="M9 1L15 6H8Z" fill="#e83040" stroke="#e02030" stroke-width="0.8" /><path d="M1 8V15H7Z" fill="#3030d0" stroke="#2020c0" stroke-width="0.8" /><path d="M4 12L11 5" fill="none" stroke="#999" stroke-width="1.8" stroke-dasharray="2 1"/><path d="M4 12L11 5" fill="none" stroke="#fff" stroke-width="0.6" /></svg>
<div class="tri" style="left:20px;top:150px;border-left-width:5px;border-bottom-width:5px"></div>
<div class="tri" style="left:20px;top:172px;border-left-width:5px;border-bottom-width:5px"></div>
<div class="tri" style="left:20px;top:194px;border-left-width:5px;border-bottom-width:5px"></div>
<div class="tri" style="left:20px;top:217px;border-left-width:5px;border-bottom-width:5px"></div>
<div class="tri" style="left:20px;top:239px;border-left-width:5px;border-bottom-width:5px"></div>
<div class="tri" style="left:20px;top:261px;border-left-width:5px;border-bottom-width:5px"></div>
<div class="tri" style="left:20px;top:283px;border-left-width:5px;border-bottom-width:5px"></div>
<div class="tri" style="left:20px;top:304px;border-left-width:5px;border-bottom-width:5px"></div>
<div class="tri" style="left:20px;top:325px;border-left-width:5px;border-bottom-width:5px"></div>
<div class="tri" style="left:20px;top:347px;border-left-width:5px;border-bottom-width:5px"></div>
<div class="tri" style="left:20px;top:369px;border-left-width:5px;border-bottom-width:5px"></div>
<div class="tri" style="left:20px;top:391px;border-left-width:5px;border-bottom-width:5px"></div>
<div class="tri" style="left:20px;top:413px;border-left-width:5px;border-bottom-width:5px"></div>
<div class="tri" style="left:20px;top:435px;border-left-width:5px;border-bottom-width:5px"></div>
<div class="tri" style="left:20px;top:457px;border-left-width:5px;border-bottom-width:5px"></div>
<div class="tri" style="left:20px;top:479px;border-left-width:5px;border-bottom-width:5px"></div>
<div class="tri" style="left:20px;top:501px;border-left-width:5px;border-bottom-width:5px"></div>
<div class="tri" style="left:20px;top:523px;border-left-width:5px;border-bottom-width:5px"></div>
<div class="tri" style="left:20px;top:546px;border-left-width:5px;border-bottom-width:5px"></div>
<div class="tri" style="left:20px;top:574px;border-left-width:5px;border-bottom-width:5px"></div>
<div class="tri" style="left:20px;top:601px;border-left-width:5px;border-bottom-width:5px"></div>
<div class="tri" style="left:20px;top:624px;border-left-width:5px;border-bottom-width:5px"></div>
<div style="left:3px;top:378px;width:20px;height:1px;background:#a8a8a8"></div>
<div style="left:3px;top:392px;width:20px;height:1px;background:#a8a8a8"></div>
<div style="left:3px;top:553px;width:20px;height:1px;background:#a8a8a8"></div>
<div style="left:3px;top:581px;width:20px;height:1px;background:#a8a8a8"></div>
<div style="left:27px;top:124px;width:1075px;height:15px;background:#f0f0f0;border-top:1px solid #fafafa"></div>
<div style="left:27px;top:124px;width:16px;height:517px;background:#f0f0f0"></div>
<div style="left:28px;top:125px;width:13px;height:13px;background:#c8c8c8"></div>
<svg style="left:28px;top:125px" width="13" height="13" viewBox="0 0 13 13"><path d="M3.5 11V2.5M1.5 4.5L3.5 2.5L5.5 4.5M3.5 9.5H11M9 7.5L11 9.5L9 11.5" fill="none" stroke="#111" stroke-width="1.2"/></svg>
<svg style="left:0;top:0" width="1366" height="708" viewBox="0 0 1366 708"><path d="M56.5 135.5V139M75.5 135.5V139M93.5 134V139M111.5 135.5V139M129.5 135.5V139M147.5 135.5V139M166.5 135.5V139M184.5 125.5V139M202.5 135.5V139M220.5 135.5V139M238.5 135.5V139M257.5 135.5V139M275.5 134V139M293.5 135.5V139M311.5 135.5V139M329.5 135.5V139M348.5 135.5V139M366.5 125.5V139M384.5 135.5V139M402.5 135.5V139M421.5 135.5V139M439.5 135.5V139M457.5 134V139M475.5 135.5V139M493.5 135.5V139M512.5 135.5V139M530.5 135.5V139M548.5 125.5V139M566.5 135.5V139M584.5 135.5V139M603.5 135.5V139M621.5 135.5V139M639.5 134V139M657.5 135.5V139M675.5 135.5V139M694.5 135.5V139M712.5 135.5V139M730.5 125.5V139M748.5 135.5V139M766.5 135.5V139M785.5 135.5V139M803.5 135.5V139M821.5 134V139M839.5 135.5V139M857.5 135.5V139M876.5 135.5V139M894.5 135.5V139M912.5 125.5V139M930.5 135.5V139M948.5 135.5V139M967.5 135.5V139M985.5 135.5V139M1003.5 134V139M1021.5 135.5V139M1040.5 135.5V139M1058.5 135.5V139M1076.5 135.5V139M1094.5 125.5V139M38.5 141.5H42M38.5 159.5H42M38.5 177.5H42M38.5 196.5H42M29 214.5H42M38.5 232.5H42M38.5 250.5H42M38.5 268.5H42M38.5 287.5H42M37 305.5H42M38.5 323.5H42M38.5 341.5H42M38.5 359.5H42M38.5 378.5H42M29 396.5H42M38.5 414.5H42M38.5 432.5H42M38.5 450.5H42M38.5 469.5H42M37 487.5H42M38.5 505.5H42M38.5 523.5H42M38.5 542.5H42M38.5 560.5H42M29 578.5H42M38.5 596.5H42M38.5 614.5H42M38.5 633.5H42" stroke="#111" stroke-width="1"/><path d="M1026.5 125V139M28 220.5H42" stroke="#d020d0" stroke-width="1"/></svg>
<span class="t rl" style="left:185px;top:125px">-10 mm</span>
<span class="t rl" style="left:367px;top:125px">0 mm</span>
<span class="t rl" style="left:549px;top:125px">10 mm</span>
<span class="t rl" style="left:731px;top:125px">20 mm</span>
<span class="t rl" style="left:913px;top:125px">30 mm</span>
<span class="t rl" style="left:1095px;top:125px">4</span>
<span class="t rl" style="left:28px;top:211px;font-size:9.5px;transform-origin:0 0;transform:rotate(-90deg)">170 mm</span>
<span class="t rl" style="left:28px;top:393px;font-size:9.5px;transform-origin:0 0;transform:rotate(-90deg)">160 mm</span>
<span class="t rl" style="left:28px;top:575px;font-size:9.5px;transform-origin:0 0;transform:rotate(-90deg)">150 mm</span>
<div style="left:42px;top:139px;width:1042px;height:481px;background:#fff;border-left:1px solid #6e6e6e;border-top:2px solid #777;border-right:1px solid #dcdcdc"></div><div style="left:43px;top:138px;width:1041px;height:1px;background:#a0a0a0"></div>
<svg style="left:0;top:0" width="1366" height="708" viewBox="0 0 1366 708"><circle cx="354.3" cy="269.8" r="54.8" fill="none" stroke="#000" stroke-width="1.2" shape-rendering="crispEdges"/><ellipse cx="347.7" cy="455.7" rx="91.3" ry="120.5" fill="none" stroke="#000" stroke-width="1.2" shape-rendering="crispEdges"/><rect x="543.5" y="210.5" width="182" height="182" fill="none" stroke="#000" stroke-width="1.3"/><path d="M71 576V591H86" fill="none" stroke="#1a7a2a" stroke-width="1.6"/><path d="M71 591H86" fill="none" stroke="#2828b0" stroke-width="1.6"/><path d="M73.5 572.5L77.5 577V581M81.5 572.5L77.5 577" fill="none" stroke="#1e7a2e" stroke-width="1.6"/><path d="M73 586.5H81.5L73.5 595.5H82" fill="none" stroke="#a02020" stroke-width="1.6"/><path d="M87.5 587.5L95.5 595.5M95.5 587.5L87.5 595.5" fill="none" stroke="#2828b0" stroke-width="1.6"/></svg>
<div style="left:1084px;top:141px;width:18px;height:479px;background:linear-gradient(90deg,#fff 0,#fff 2px,#efefef 2px,#efefef 15px,#e6e6e6 18px)"></div>
<div style="left:1090px;top:146px;border-left:4px solid transparent;border-right:4px solid transparent;border-bottom:4px solid #444"></div>
<div style="left:1090px;top:610px;border-left:4px solid transparent;border-right:4px solid transparent;border-top:4px solid #222"></div>
<div style="left:1087px;top:218px;width:13px;height:22px;border:1px solid #9c9c9c;border-radius:2px;background:linear-gradient(90deg,#f4f4f4,#dedede)"></div>
<div style="left:1090px;top:225px;width:7px;height:7px;background:repeating-linear-gradient(#555 0 1px,transparent 1px 3px)"></div>
<div style="left:43px;top:621px;width:1042px;height:20px;background:#f0f0f0"></div>
<div style="left:52px;top:620px;width:156px;height:1px;background:#8a8a8a"></div><div style="left:43px;top:619px;width:1041px;height:1px;background:#dcdcdc"></div>
<div style="left:52px;top:621px;width:65px;height:19px;background:linear-gradient(#fbfbfb,#f2f2f2);border-bottom:2px solid #222;border-right:1px solid #555;border-radius:0 0 4px 3px"></div>
<div style="left:117px;top:621px;width:69px;height:17px;background:linear-gradient(#e6e6e6,#d6d6d6);border:1px solid #c0c0c0;border-top:none;border-radius:0 0 3px 3px"></div>
<svg style="left:57px;top:622px" width="14" height="14" viewBox="0 0 14 14"><path d="M3 2h6l3 3v4l-3 3H5L2 9V4z" fill="#fff" stroke="#222" stroke-width="1.2"/><circle cx="7.5" cy="8" r="3.5" fill="#555" stroke="#111"/></svg>
<span class="t" style="left:74px;top:624px;font-size:12px;font-weight:bold;color:#222">Model</span>
<svg style="left:123px;top:622px" width="12" height="14" viewBox="0 0 12 14"><path d="M1.5 1.5h6l3 3v8h-9z" fill="#fff" stroke="#222"/><path d="M5 6l1.5-1v6" fill="none" stroke="#222"/></svg>
<span class="t" style="left:139px;top:624px;font-size:11.5px;color:#777">Paper 1</span>
<div style="left:211px;top:622px;width:1px;height:18px;background:#777"></div>
<div style="left:219px;top:627px;border-top:4px solid transparent;border-bottom:4px solid transparent;border-right:4px solid #333"></div>
<div style="left:1075px;top:627px;border-top:4px solid transparent;border-bottom:4px solid transparent;border-left:4px solid #333"></div>
<div style="left:609px;top:624px;width:129px;height:14px;border:1px solid #9a9a9a;border-radius:2px;background:linear-gradient(#f6f6f6,#d8d8d8)"></div>
<div style="left:670px;top:628px;width:6px;height:6px;background:repeating-linear-gradient(90deg,#555 0 1px,transparent 1px 2px)"></div>
<div style="left:1102px;top:123px;width:264px;height:498px;background:#f0f0f0"></div>
<div style="left:1106px;top:123px;width:260px;height:367px;background:#edf0f5;border-left:1px solid #c0c8d2"></div>
<div class="ptitle" style="left:1106px;top:123px;width:260px;height:23px"><span class="t">Tools</span></div>
<svg style="left:1328px;top:124px" width="18" height="20" viewBox="0 0 18 20"><path d="M1.5 17.5L5 14" stroke="#555" stroke-width="1.6"/><circle cx="9" cy="11" r="6" fill="#d4d4d4" stroke="#555" stroke-width="1.1"/><circle cx="12.5" cy="7.5" r="4" fill="#e8e8e8" stroke="#555" stroke-width="1.1"/><circle cx="8" cy="10" r="3" fill="#fafafa"/><circle cx="12" cy="7" r="2" fill="#fff"/></svg>
<div style="left:1348px;top:127px;width:16px;height:15px;background:#fff"></div><div style="left:1349px;top:128px;width:14px;height:13px;background:linear-gradient(#c0c0c0,#a8a8a8)"></div>
<svg style="left:1351px;top:130px" width="10" height="10" viewBox="0 0 10 10"><path d="M1.5 1.5L8.5 8.5M8.5 1.5L1.5 8.5" stroke="#fff" stroke-width="2.2"/></svg>
<div style="left:1107px;top:146px;width:259px;height:28px;background:linear-gradient(#f4f6fa,#dfe4ee);border-bottom:1px solid #c9d0dc"></div>
<div class="press" style="left:1108px;top:150px;width:22px;height:21px"></div>
<svg style="left:1111px;top:152px" width="16" height="16" viewBox="0 0 16 16"><path d="M5.5 1.5V13L8 10.5L10.5 15L12 14.2L9.7 9.8H13Z" fill="#fff" stroke="#111" stroke-width="1.1" /></svg>
<svg style="left:1133px;top:152px" width="16" height="16" viewBox="0 0 16 16"><path d="M1.5 13Q3 6 8 2" fill="none" stroke="#555" stroke-width="1" /><rect x="5.0" y="3.0" width="3" height="3" fill="#e0e0ff" stroke="#3030c0" stroke-width="1.2"/><path d="M8 7V15L10 13L11.5 16L12.5 15.5L11 12.5H13.5Z" fill="#fff" stroke="#333" stroke-width="0.8" /></svg>
<svg style="left:1154px;top:152px" width="16" height="16" viewBox="0 0 16 16"><circle cx="7.5" cy="8.5" r="6.5" fill="#3a5ad8" stroke="#2a3a98"/><path d="M2 6Q5 2 9 3Q8 6 5 7Z" fill="#40b040" stroke="none" stroke-width="0" /><path d="M3 12Q7 9 13 11Q10 15 5 14Z" fill="#e8e8f8" stroke="none" stroke-width="0" /><path d="M13.5 2V15" fill="none" stroke="#333" stroke-width="1.1" /></svg>
<div class="sep" style="left:1176px;top:151px;height:20px"></div>
<div style="left:1180px;top:150px;width:99px;height:21px;background:#fff;border:1px solid #9aa0aa"></div>
<span class="t" style="left:1183px;top:155px;font-size:12px;color:#111">Sketch</span>
<div style="left:1263px;top:151px;width:15px;height:19px;background:linear-gradient(#e4e4e4,#c8c8c8);border-left:1px solid #aaa"></div>
<div style="left:1266px;top:158px;border-left:4px solid transparent;border-right:4px solid transparent;border-top:5px solid #000"></div>
<svg style="left:1283px;top:152px" width="16" height="16" viewBox="0 0 16 16"><path d="M7.5 3L10 1.5L13.5 4.5V10H7.5Z" fill="#fff" stroke="#111" stroke-width="1.1" /><path d="M9 5H12M9 7H12" fill="none" stroke="#444" stroke-width="0.8" /><path d="M0.5 15.5V8.5Q0.5 5.5 3.5 5.2H5.5Q8 5.5 8 8.5V15.5Z" fill="#e81010" stroke="#2a0000" stroke-width="1.2" /><path d="M8 15.5L13.8 10L12 8.5L8 11Z" fill="#701010" stroke="#2a0000" stroke-width="1" /><path d="M1.2 1.5L6.5 6.2" fill="none" stroke="#111" stroke-width="2.8" /><path d="M1.2 1.5L6.5 6.2" fill="none" stroke="#a8e8e8" stroke-width="1.1" /></svg>
<div class="tri" style="left:1296px;top:164px;border-left-width:5px;border-bottom-width:5px"></div>
<div style="left:1107px;top:174px;width:243px;height:291px;background:#e9ecf2;overflow:hidden"></div>
<div style="left:1350px;top:174px;width:16px;height:291px;background:#f0f0f0"></div>
<div style="left:1354px;top:182px;border-left:4px solid transparent;border-right:4px solid transparent;border-bottom:4px solid #333"></div>
<div style="left:1354px;top:455px;border-left:4px solid transparent;border-right:4px solid transparent;border-top:4px solid #333"></div>
<div style="left:1351px;top:288px;width:13px;height:88px;border:1px solid #a8a8a8;border-radius:2px;background:linear-gradient(90deg,#f6f6f6,#dcdcdc)"></div>
<div style="left:1354px;top:328px;width:7px;height:7px;background:repeating-linear-gradient(#555 0 1px,transparent 1px 3px)"></div>
<div class="sect" style="top:174px;height:27px"></div>
<div style="left:1107px;top:174px;width:240px;height:20px;overflow:hidden"><svg style="left:18px;top:-4px" width="16" height="16" viewBox="0 0 16 16"><path d="M1.3 12.7L12.7 1.3" fill="none" stroke="#111" stroke-width="1.3" /><path d="M6.5 12.5H12.5M6.5 12V16.8M12.5 12V16.8" fill="none" stroke="#111" stroke-width="1.5" /><path d="M8 7Q12 6 13 9" fill="none" stroke="#8a8a9a" stroke-width="0.8" /><rect x="5.5" y="4.5" width="3" height="3" fill="#d8d8f8" stroke="#12128a" stroke-width="1.15"/><rect x="12.5" y="6.5" width="3" height="3" fill="#d8d8f8" stroke="#12128a" stroke-width="1.15"/><rect x="7.5" y="10.5" width="3" height="3" fill="#d8d8f8" stroke="#12128a" stroke-width="1.15"/></svg><svg style="left:46px;top:-4px" width="16" height="16" viewBox="0 0 16 16"><path d="M2.2 3Q0 6 1 9Q3 11.5 8 11.5Q13 11.5 14.4 11.5Q16.5 8 14 5Q12.5 3.5 11.4 4.2" fill="none" stroke="#111" stroke-width="1.3" /><path d="M6.5 4.2L8.1 8.5L11.4 4.2" fill="none" stroke="#8a8a9a" stroke-width="0.8" /><rect x="0.5" y="0.5" width="3" height="3" fill="#d8d8f8" stroke="#12128a" stroke-width="1.15"/><rect x="4.5" y="2.5" width="3" height="3" fill="#d8d8f8" stroke="#12128a" stroke-width="1.15"/><rect x="9.5" y="2.5" width="3" height="3" fill="#d8d8f8" stroke="#12128a" stroke-width="1.15"/><rect x="12.5" y="9.5" width="3" height="3" fill="#d8d8f8" stroke="#12128a" stroke-width="1.15"/></svg><svg style="left:74px;top:-4px" width="16" height="16" viewBox="0 0 16 16"><path d="M1.2 14.8Q0.5 9 4 5Q8 1.5 14.4 2.3Q14.5 8 12.4 9.5Q10.5 12 8.5 13.5Q5 14.5 1.2 14.8" fill="none" stroke="#111" stroke-width="1.3" /><path d="M1.2 14.8L14.4 2.3" fill="none" stroke="#8a8a9a" stroke-width="0.8" /><rect x="-0.5" y="13.5" width="3" height="3" fill="#d8d8f8" stroke="#12128a" stroke-width="1.15"/><rect x="6.5" y="11.5" width="3" height="3" fill="#d8d8f8" stroke="#12128a" stroke-width="1.15"/><rect x="10.5" y="7.5" width="3" height="3" fill="#d8d8f8" stroke="#12128a" stroke-width="1.15"/><rect x="12.5" y="0.5" width="3" height="3" fill="#d8d8f8" stroke="#12128a" stroke-width="1.15"/></svg><svg style="left:102px;top:-4px" width="16" height="16" viewBox="0 0 16 16"><ellipse cx="8.5" cy="11" rx="7" ry="4.3" fill="none" stroke="#111" stroke-width="1.2"/><rect x="6" y="14.5" width="5" height="2" fill="#111"/></svg></div>
<div style="left:1107px;top:201px;width:243px;height:3px;background:#c9d1de"></div>
<div class="sect" style="top:204px;height:97px"><div class="sh"><span class="t">Arc</span><div class="cbut"></div></div></div>
<svg style="left:1326px;top:207px" width="16" height="16" viewBox="0 0 16 16"><path d="M4.5 8L8 4.5L11.5 8M4.5 12L8 8.5L11.5 12" fill="none" stroke="#304a78" stroke-width="1.4"/></svg>
<svg style="left:1125px;top:242px" width="16" height="16" viewBox="0 0 16 16"><path d="M2.6 13.2A7 7 0 1 1 14.3 8.3" fill="none" stroke="#111" stroke-width="1.3" /><path d="M7.5 8.3H14M7.5 8.3L3 13" fill="none" stroke="#8a8a9a" stroke-width="0.8" /><rect x="1.5" y="11.5" width="3" height="3" fill="#d8d8f8" stroke="#12128a" stroke-width="1.15"/><rect x="5.5" y="6.5" width="3" height="3" fill="#d8d8f8" stroke="#12128a" stroke-width="1.15"/><rect x="12.5" y="6.5" width="3" height="3" fill="#d8d8f8" stroke="#12128a" stroke-width="1.15"/></svg>
<svg style="left:1153px;top:242px" width="16" height="16" viewBox="0 0 16 16"><path d="M2 12.5A7.2 7.2 0 1 1 13.8 5.7" fill="none" stroke="#111" stroke-width="1.3" /><path d="M3.5 10.5A4.3 4.3 0 1 1 11.5 7" fill="none" stroke="#111" stroke-width="1.3" /><path d="M7.5 8.3H14M7.5 8.3L3 13" fill="none" stroke="#8a8a9a" stroke-width="0.8" /><rect x="0.5" y="11.5" width="3" height="3" fill="#d8d8f8" stroke="#12128a" stroke-width="1.15"/><rect x="5.5" y="6.5" width="3" height="3" fill="#d8d8f8" stroke="#12128a" stroke-width="1.15"/><rect x="12.5" y="6.5" width="3" height="3" fill="#d8d8f8" stroke="#12128a" stroke-width="1.15"/></svg>
<svg style="left:1181px;top:242px" width="16" height="16" viewBox="0 0 16 16"><path d="M1.5 7.5Q3 14.5 8.7 14.4Q15.5 14 15.4 7.7Q15.3 4.5 13.4 2.4" fill="none" stroke="#111" stroke-width="1.3" /><path d="M2 7.5L13 3" fill="none" stroke="#8a8a9a" stroke-width="0.8" stroke-dasharray="1 1"/><rect x="-0.5" y="5.5" width="3" height="3" fill="#d8d8f8" stroke="#12128a" stroke-width="1.15"/><rect x="11.5" y="0.5" width="3" height="3" fill="#d8d8f8" stroke="#12128a" stroke-width="1.15"/></svg>
<svg style="left:1209px;top:242px" width="16" height="16" viewBox="0 0 16 16"><path d="M2.7 15.3Q-0.5 9 1.5 5Q4 1 9 2Q13.5 3.5 13.5 10.5" fill="none" stroke="#111" stroke-width="1.3" /><path d="M0.3 4L8.3 1.2" fill="none" stroke="#111" stroke-width="1.1" /><path d="M2.7 15L7 11" fill="none" stroke="#8a8a9a" stroke-width="0.8" stroke-dasharray="1 1"/><rect x="1.5" y="13.5" width="3" height="3" fill="#d8d8f8" stroke="#12128a" stroke-width="1.15"/><rect x="3.5" y="1.5" width="3" height="3" fill="#d8d8f8" stroke="#12128a" stroke-width="1.15"/><rect x="11.5" y="8.5" width="3" height="3" fill="#d8d8f8" stroke="#12128a" stroke-width="1.15"/></svg>
<svg style="left:1237px;top:242px" width="16" height="16" viewBox="0 0 16 16"><path d="M0 12.9L11.7 1.2" fill="none" stroke="#111" stroke-width="1.3" /><path d="M6.5 8Q7 6.5 9 6.5Q12.5 7 12.5 8.5" fill="none" stroke="#111" stroke-width="1.1" /><path d="M6.5 8Q6 11 8.5 12.5" fill="none" stroke="#111" stroke-width="1" /><path d="M2 2L4 3M13 13L14 14" fill="none" stroke="#8a8a9a" stroke-width="0.8" stroke-dasharray="1 1"/><rect x="10.5" y="6.5" width="3" height="3" fill="#d8d8f8" stroke="#12128a" stroke-width="1.15"/><rect x="6.5" y="10.5" width="3" height="3" fill="#d8d8f8" stroke="#12128a" stroke-width="1.15"/></svg>
<svg style="left:1265px;top:242px" width="16" height="16" viewBox="0 0 16 16"><text x="0" y="7.5" font-family="Liberation Sans" font-weight="bold" font-size="8" fill="#111">1</text><text x="6.5" y="11.5" font-family="Liberation Sans" font-weight="bold" font-size="8" fill="#111">2</text><text x="0" y="16.5" font-family="Liberation Sans" font-weight="bold" font-size="8" fill="#111">3</text><path d="M6.3 2.4Q12.7 3 12.7 8.5Q12.7 14 6.3 14.9" fill="none" stroke="#111" stroke-width="1.3" /><rect x="4.5" y="0.5" width="3" height="3" fill="#d8d8f8" stroke="#12128a" stroke-width="1.15"/><rect x="11.5" y="6.5" width="3" height="3" fill="#d8d8f8" stroke="#12128a" stroke-width="1.15"/><rect x="4.5" y="13.5" width="3" height="3" fill="#d8d8f8" stroke="#12128a" stroke-width="1.15"/></svg>
<svg style="left:1293px;top:242px" width="16" height="16" viewBox="0 0 16 16"><text x="0" y="7.5" font-family="Liberation Sans" font-weight="bold" font-size="8" fill="#111">1</text><text x="6.5" y="11.5" font-family="Liberation Sans" font-weight="bold" font-size="8" fill="#111">3</text><text x="0" y="16.5" font-family="Liberation Sans" font-weight="bold" font-size="8" fill="#111">2</text><path d="M6.3 2.4Q12.7 3 12.7 8.5Q12.7 14 6.3 14.9" fill="none" stroke="#111" stroke-width="1.3" /><rect x="4.5" y="0.5" width="3" height="3" fill="#d8d8f8" stroke="#12128a" stroke-width="1.15"/><rect x="11.5" y="6.5" width="3" height="3" fill="#d8d8f8" stroke="#12128a" stroke-width="1.15"/><rect x="4.5" y="13.5" width="3" height="3" fill="#d8d8f8" stroke="#12128a" stroke-width="1.15"/></svg>
<svg style="left:1125px;top:270px" width="16" height="16" viewBox="0 0 16 16"><path d="M5 2.5Q9 1 12.5 3Q15.5 6 14.5 10Q13 14 8.5 14.5Q5 14.5 3.5 10.5" fill="none" stroke="#111" stroke-width="1.3" /><path d="M3.2 1.3L13.7 2.1M0 7.1L4.7 14.7" fill="none" stroke="#111" stroke-width="1.1" /><path d="M8 9H12M7 9L10 5" fill="none" stroke="#8a8a9a" stroke-width="0.8" stroke-dasharray="1 1"/><rect x="6.5" y="0.5" width="3" height="3" fill="#d8d8f8" stroke="#12128a" stroke-width="1.15"/><rect x="1.5" y="8.5" width="3" height="3" fill="#d8d8f8" stroke="#12128a" stroke-width="1.15"/><rect x="11.5" y="10.5" width="3" height="3" fill="#d8d8f8" stroke="#12128a" stroke-width="1.15"/></svg>
<svg style="left:1153px;top:270px" width="16" height="16" viewBox="0 0 16 16"><path d="M1.3 12.7L12.7 1.3" fill="none" stroke="#111" stroke-width="1.3" /><path d="M6.5 12.5H12.5M6.5 12V16.8M12.5 12V16.8" fill="none" stroke="#111" stroke-width="1.5" /><path d="M8 7Q12 6 13 9" fill="none" stroke="#8a8a9a" stroke-width="0.8" /><rect x="5.5" y="4.5" width="3" height="3" fill="#d8d8f8" stroke="#12128a" stroke-width="1.15"/><rect x="12.5" y="6.5" width="3" height="3" fill="#d8d8f8" stroke="#12128a" stroke-width="1.15"/><rect x="7.5" y="10.5" width="3" height="3" fill="#d8d8f8" stroke="#12128a" stroke-width="1.15"/></svg>
<svg style="left:1181px;top:270px" width="16" height="16" viewBox="0 0 16 16"><path d="M1.3 12.7L12.7 1.3" fill="none" stroke="#111" stroke-width="1.3" /><path d="M8 6.5A3 3 0 1 1 11 11.5" fill="none" stroke="#888" stroke-width="0.9" /><path d="M6.5 12.5H12.5M6.5 12V16.8M12.5 12V16.8" fill="none" stroke="#111" stroke-width="1.5" /><rect x="5.5" y="4.5" width="3" height="3" fill="#d8d8f8" stroke="#12128a" stroke-width="1.15"/><rect x="7.5" y="10.5" width="3" height="3" fill="#d8d8f8" stroke="#12128a" stroke-width="1.15"/></svg>
<svg style="left:1209px;top:270px" width="16" height="16" viewBox="0 0 16 16"><path d="M2.2 3Q0 6 1 9Q3 11.5 8 11.5Q13 11.5 14.4 11.5Q16.5 8 14 5Q12.5 3.5 11.4 4.2" fill="none" stroke="#111" stroke-width="1.3" /><path d="M6.5 4.2L8.1 8.5L11.4 4.2" fill="none" stroke="#8a8a9a" stroke-width="0.8" /><rect x="0.5" y="0.5" width="3" height="3" fill="#d8d8f8" stroke="#12128a" stroke-width="1.15"/><rect x="4.5" y="2.5" width="3" height="3" fill="#d8d8f8" stroke="#12128a" stroke-width="1.15"/><rect x="9.5" y="2.5" width="3" height="3" fill="#d8d8f8" stroke="#12128a" stroke-width="1.15"/><rect x="12.5" y="9.5" width="3" height="3" fill="#d8d8f8" stroke="#12128a" stroke-width="1.15"/></svg>
<svg style="left:1237px;top:270px" width="16" height="16" viewBox="0 0 16 16"><path d="M1.2 14.8Q0.5 9 4 5Q8 1.5 14.4 2.3Q14.5 8 12.4 9.5Q10.5 12 8.5 13.5Q5 14.5 1.2 14.8" fill="none" stroke="#111" stroke-width="1.3" /><path d="M1.2 14.8L14.4 2.3" fill="none" stroke="#8a8a9a" stroke-width="0.8" /><rect x="-0.5" y="13.5" width="3" height="3" fill="#d8d8f8" stroke="#12128a" stroke-width="1.15"/><rect x="6.5" y="11.5" width="3" height="3" fill="#d8d8f8" stroke="#12128a" stroke-width="1.15"/><rect x="10.5" y="7.5" width="3" height="3" fill="#d8d8f8" stroke="#12128a" stroke-width="1.15"/><rect x="12.5" y="0.5" width="3" height="3" fill="#d8d8f8" stroke="#12128a" stroke-width="1.15"/></svg>
<svg style="left:1265px;top:270px" width="16" height="16" viewBox="0 0 16 16"><text x="2.5" y="5.5" font-family="Liberation Sans" font-weight="bold" font-size="6" fill="#14148a" letter-spacing="0.3">a:b</text><path d="M1.2 13.5Q0.5 7.2 8.8 7.2Q16 7.2 15.4 13.5" fill="none" stroke="#111" stroke-width="1.4" /></svg>
<div style="left:1107px;top:301px;width:243px;height:3px;background:#c9d1de"></div>
<div class="sect" style="top:304px;height:97px"><div class="sh"><span class="t">Curve</span><div class="cbut"></div></div></div>
<svg style="left:1326px;top:307px" width="16" height="16" viewBox="0 0 16 16"><path d="M4.5 8L8 4.5L11.5 8M4.5 12L8 8.5L11.5 12" fill="none" stroke="#304a78" stroke-width="1.4"/></svg>
<svg style="left:1125px;top:342px" width="16" height="16" viewBox="0 0 16 16"><path d="M1.4 14.9Q4 4 8.5 4Q12 4 14.6 13.4" fill="none" stroke="#111" stroke-width="1.3" /><rect x="1.5" y="0.5" width="3" height="3" fill="#d8d8f8" stroke="#12128a" stroke-width="1.15"/><rect x="12.5" y="0.5" width="3" height="3" fill="#d8d8f8" stroke="#12128a" stroke-width="1.15"/><rect x="-0.5" y="13.5" width="3" height="3" fill="#d8d8f8" stroke="#12128a" stroke-width="1.15"/><rect x="13.5" y="11.5" width="3" height="3" fill="#d8d8f8" stroke="#12128a" stroke-width="1.15"/></svg>
<svg style="left:1153px;top:342px" width="16" height="16" viewBox="0 0 16 16"><path d="M2.5 14.9L9.7 10.5L4.3 6.6L12.5 3.3" fill="none" stroke="#111" stroke-width="1.3" /><rect x="1.5" y="13.5" width="3" height="3" fill="#d8d8f8" stroke="#12128a" stroke-width="1.15"/><rect x="8.5" y="8.5" width="3" height="3" fill="#d8d8f8" stroke="#12128a" stroke-width="1.15"/><rect x="2.5" y="5.5" width="3" height="3" fill="#d8d8f8" stroke="#12128a" stroke-width="1.15"/><rect x="10.5" y="1.5" width="3" height="3" fill="#d8d8f8" stroke="#12128a" stroke-width="1.15"/></svg>
<svg style="left:1181px;top:342px" width="16" height="16" viewBox="0 0 16 16"><path d="M1.2 14.9L4.4 4.4Q8 0.5 12.6 4.4L14.5 13.4" fill="none" stroke="#111" stroke-width="1.3" /><rect x="-0.5" y="13.5" width="3" height="3" fill="#d8d8f8" stroke="#12128a" stroke-width="1.15"/><rect x="2.5" y="2.5" width="3" height="3" fill="#d8d8f8" stroke="#12128a" stroke-width="1.15"/><rect x="11.5" y="2.5" width="3" height="3" fill="#d8d8f8" stroke="#12128a" stroke-width="1.15"/><rect x="13.5" y="11.5" width="3" height="3" fill="#d8d8f8" stroke="#12128a" stroke-width="1.15"/></svg>
<svg style="left:1209px;top:342px" width="16" height="16" viewBox="0 0 16 16"><path d="M2.1 12.3Q2 3 9 1.5Q15 1 15.5 6Q15.5 12 11 13.5Q7.5 14.5 7 11Q7 7 11.7 6.2" fill="none" stroke="#111" stroke-width="1.3" /><rect x="0.5" y="10.5" width="3" height="3" fill="#d8d8f8" stroke="#12128a" stroke-width="1.15"/><rect x="10.5" y="4.5" width="3" height="3" fill="#d8d8f8" stroke="#12128a" stroke-width="1.15"/></svg>
<svg style="left:1237px;top:342px" width="16" height="16" viewBox="0 0 16 16"><path d="M2.4 12.5Q2 3 9 1.5Q15 1 15.5 6Q15.5 12 11 13.5Q7.5 14.5 7 11Q7 7 11.7 6.2" fill="none" stroke="#111" stroke-width="1.3" /><rect x="0.5" y="10.5" width="3" height="3" fill="#d8d8f8" stroke="#12128a" stroke-width="1.15"/><rect x="10.5" y="4.5" width="3" height="3" fill="#d8d8f8" stroke="#12128a" stroke-width="1.15"/></svg>
<svg style="left:1265px;top:342px" width="16" height="16" viewBox="0 0 16 16"><path d="M6 15.4H3Q0.5 14 1.5 11Q3 9.5 2 7.5Q1 4 5 3.5Q7 1.5 10 2Q14 2.5 13.5 7.5Q16 9 15.5 12Q15 15 12.5 15.4" fill="none" stroke="#111" stroke-width="1.3" /><rect x="4.5" y="13.5" width="3" height="3" fill="#d8d8f8" stroke="#12128a" stroke-width="1.15"/><rect x="10.5" y="13.5" width="3" height="3" fill="#d8d8f8" stroke="#12128a" stroke-width="1.15"/></svg>
<svg style="left:1293px;top:342px" width="16" height="16" viewBox="0 0 16 16"><path d="M1.3 13.2L5.7 8L9.4 10L14.5 3.3" fill="none" stroke="#111" stroke-width="1.3" /><path d="M5.7 3V7.5M9.4 10.5V14" fill="none" stroke="#111" stroke-width="1" stroke-dasharray="1 1"/><rect x="4.5" y="1.5" width="3" height="3" fill="#d8d8f8" stroke="#111" stroke-width="1.15"/><rect x="12.5" y="1.5" width="3" height="3" fill="#d8d8f8" stroke="#111" stroke-width="1.15"/><rect x="-0.5" y="11.5" width="3" height="3" fill="#d8d8f8" stroke="#111" stroke-width="1.15"/><rect x="7.5" y="13.5" width="3" height="3" fill="#d8d8f8" stroke="#111" stroke-width="1.15"/></svg>
<svg style="left:1125px;top:370px" width="16" height="16" viewBox="0 0 16 16"><path d="M1.5 14.5Q1.5 3.5 8.5 3.5Q15 3.5 15.5 12.5" fill="none" stroke="#9a9a9a" stroke-width="1.1" /><path d="M2.5 12Q3 5.5 8 5" fill="none" stroke="#c8c8c8" stroke-width="0.7" /></svg>
<div style="left:1107px;top:401px;width:243px;height:3px;background:#c9d1de"></div>
<div class="sect" style="top:404px;height:61px"><div class="sh"><span class="t">Double Line</span><div class="cbut"></div></div></div>
<svg style="left:1326px;top:407px" width="16" height="16" viewBox="0 0 16 16"><path d="M4.5 8L8 4.5L11.5 8M4.5 12L8 8.5L11.5 12" fill="none" stroke="#304a78" stroke-width="1.4"/></svg>
<svg style="left:1125px;top:442px" width="16" height="16" viewBox="0 0 16 16"><path d="M0.1 8.5L7.8 1.2M6 14.8L14.8 6" fill="none" stroke="#111" stroke-width="1.2" /><rect x="0.5" y="10.5" width="3" height="3" fill="#d8d8f8" stroke="#12128a" stroke-width="1.15"/><rect x="10.5" y="0.5" width="3" height="3" fill="#d8d8f8" stroke="#12128a" stroke-width="1.15"/></svg>
<svg style="left:1153px;top:442px" width="16" height="16" viewBox="0 0 16 16"><path d="M-0.1 7.4L7.6 0.8L15 7.4M3.2 13.7L7.6 9.3L11.7 13.7" fill="none" stroke="#111" stroke-width="1.2" /><rect x="5.5" y="4.5" width="3" height="3" fill="#d8d8f8" stroke="#12128a" stroke-width="1.15"/><rect x="-0.5" y="8.5" width="3" height="3" fill="#d8d8f8" stroke="#12128a" stroke-width="1.15"/><rect x="11.5" y="8.5" width="3" height="3" fill="#d8d8f8" stroke="#12128a" stroke-width="1.15"/></svg>
<svg style="left:1181px;top:442px" width="16" height="16" viewBox="0 0 16 16"><path d="M5 1.2H11.5L15.5 5V11.5L11.5 15.1H5L1.2 11.5V5Z" fill="#fff" stroke="#111" stroke-width="1.3" /><circle cx="8.5" cy="8.2" r="4" fill="none" stroke="#111" stroke-width="1.2"/><rect x="5" y="15" width="7" height="2" fill="#111"/><rect x="6.5" y="6.5" width="3" height="3" fill="#d8d8f8" stroke="#12128a" stroke-width="1.15"/><rect x="1.5" y="0.5" width="3" height="3" fill="#d8d8f8" stroke="#12128a" stroke-width="1.15"/></svg>
<svg style="left:1209px;top:442px" width="16" height="16" viewBox="0 0 16 16"><path d="M0.5 1.5H10L15.5 7V14.5H5L0.5 10Z" fill="#fff" stroke="#14146a" stroke-width="2.4" /><path d="M4 5H9.5L12 7.5V10.5H6L4 8.5Z" fill="none" stroke="#14146a" stroke-width="1.6" /><rect x="1.5" y="1.5" width="3" height="3" fill="#d8d8f8" stroke="#12128a" stroke-width="1.15"/><rect x="6.5" y="1.5" width="3" height="3" fill="#d8d8f8" stroke="#12128a" stroke-width="1.15"/><rect x="1.5" y="6.5" width="3" height="3" fill="#d8d8f8" stroke="#12128a" stroke-width="1.15"/><rect x="11.5" y="7.5" width="3" height="3" fill="#d8d8f8" stroke="#12128a" stroke-width="1.15"/><rect x="9.5" y="11.5" width="3" height="3" fill="#d8d8f8" stroke="#12128a" stroke-width="1.15"/><rect x="4.5" y="11.5" width="3" height="3" fill="#d8d8f8" stroke="#12128a" stroke-width="1.15"/></svg>
<svg style="left:1237px;top:442px" width="16" height="16" viewBox="0 0 16 16"><rect x="1" y="1.5" width="14.5" height="14.5" fill="#fff" stroke="#111" stroke-width="1.6"/><rect x="0.5" y="15" width="16" height="2" fill="#111"/><rect x="4.5" y="5.5" width="7" height="6" fill="none" stroke="#111" stroke-width="1.3"/><rect x="0.5" y="1.5" width="3" height="3" fill="#d8d8f8" stroke="#12128a" stroke-width="1.15"/><rect x="12.5" y="11.5" width="3" height="3" fill="#d8d8f8" stroke="#12128a" stroke-width="1.15"/></svg>
<svg style="left:1265px;top:442px" width="16" height="16" viewBox="0 0 16 16"><path d="M1.5 9.3L8.4 2.3L13.9 8.2L6.6 14.4Z" fill="none" stroke="#111" stroke-width="1.2" /><path d="M4.5 9L8.3 5.5L11 8.2L7 11.7Z" fill="none" stroke="#111" stroke-width="1.1" /><rect x="6.5" y="0.5" width="3" height="3" fill="#d8d8f8" stroke="#12128a" stroke-width="1.15"/><rect x="5.5" y="12.5" width="3" height="3" fill="#d8d8f8" stroke="#12128a" stroke-width="1.15"/><path d="M14.5 15V11.5L13 12.5M14.5 11.5L16 12.5" fill="none" stroke="#14148a" stroke-width="1.1" /></svg>
<svg style="left:1293px;top:442px" width="16" height="16" viewBox="0 0 16 16"><path d="M0.9 9.6L10.1 0.9" fill="none" stroke="#111" stroke-width="1.2" /><path d="M5.3 5.2L13.4 13.3M8.2 4.9L15.6 12.6" fill="none" stroke="#111" stroke-width="1.1" /><path d="M13.4 13.3V16.5" fill="none" stroke="#14148a" stroke-width="1.2" /><rect x="3.5" y="3.5" width="3" height="3" fill="#d8d8f8" stroke="#12128a" stroke-width="1.15"/><rect x="11.5" y="11.5" width="3" height="3" fill="#d8d8f8" stroke="#12128a" stroke-width="1.15"/></svg>
<div style="left:1107px;top:465px;width:259px;height:26px;background:#f0f0f0"></div>
<div style="left:1167px;top:469px;width:65px;height:20px;background:linear-gradient(#ececec,#d6d6d6);border:1px solid #b8b8b8;border-top:none"></div>
<svg style="left:1171px;top:470px" width="16" height="16" viewBox="0 0 16 16"><path d="M1 1V13L4 10L6.5 15L8.5 14L6 9.5H10Z" fill="#2a2a98" stroke="#1a1a80" stroke-width="0.8" /><rect x="11" y="8" width="2" height="2" fill="#1a1a80"/><rect x="11" y="12" width="2" height="2" fill="#1a1a80"/></svg>
<span class="t" style="left:1189px;top:471px;font-size:12.5px;color:#111;letter-spacing:-0.2px">Selec...</span>
<div style="left:1233px;top:469px;width:60px;height:20px;background:linear-gradient(#ececec,#d6d6d6);border:1px solid #b8b8b8;border-top:none"></div>
<svg style="left:1237px;top:470px" width="16" height="16" viewBox="0 0 16 16"><rect x="4.5" y="1.5" width="10" height="10" fill="#fff" stroke="#1a1a80" stroke-width="1.4"/><rect x="7" y="4" width="5" height="5" fill="none" stroke="#1a1a80"/><rect x="1.5" y="8.5" width="7" height="7" fill="#fff" stroke="#111"/><path d="M3 14L6.5 10.5M4 10.5H6.5V13" fill="none" stroke="#111" stroke-width="1" /><rect x="3.0" y="0.0" width="3" height="3" fill="#e0e0ff" stroke="#1818a0" stroke-width="1.2"/><rect x="13.0" y="0.0" width="3" height="3" fill="#e0e0ff" stroke="#1818a0" stroke-width="1.2"/><rect x="13.0" y="10.0" width="3" height="3" fill="#e0e0ff" stroke="#1818a0" stroke-width="1.2"/></svg>
<span class="t" style="left:1256px;top:471px;font-size:12.5px;color:#111;letter-spacing:-0.2px">Blocks</span>
<div style="left:1294px;top:469px;width:63px;height:20px;background:linear-gradient(#ececec,#d6d6d6);border:1px solid #b8b8b8;border-top:none"></div>
<svg style="left:1298px;top:470px" width="16" height="16" viewBox="0 0 16 16"><rect x="0.5" y="2.5" width="15" height="11" fill="#1a9a8a" stroke="#1a3a3a"/><rect x="2" y="4" width="12" height="3" fill="#70e0d0"/><path d="M2 9.5H14M2 11.5H14" fill="none" stroke="#103030" stroke-width="1" stroke-dasharray="1 1"/></svg>
<span class="t" style="left:1318px;top:471px;font-size:12.5px;color:#111;letter-spacing:-0.2px">Varia...</span>
<div style="left:1107px;top:466px;width:60px;height:24px;background:#fff;border:1px solid #a0a0a0;border-top:none"></div>
<svg style="left:1112px;top:471px" width="16" height="16" viewBox="0 0 16 16"><path d="M7.5 3L10 1.5L13.5 4.5V10H7.5Z" fill="#fff" stroke="#111" stroke-width="1.1" /><path d="M9 5H12M9 7H12" fill="none" stroke="#444" stroke-width="0.8" /><path d="M0.5 15.5V8.5Q0.5 5.5 3.5 5.2H5.5Q8 5.5 8 8.5V15.5Z" fill="#e81010" stroke="#2a0000" stroke-width="1.2" /><path d="M8 15.5L13.8 10L12 8.5L8 11Z" fill="#701010" stroke="#2a0000" stroke-width="1" /><path d="M1.2 1.5L6.5 6.2" fill="none" stroke="#111" stroke-width="2.8" /><path d="M1.2 1.5L6.5 6.2" fill="none" stroke="#a8e8e8" stroke-width="1.1" /></svg>
<span class="t" style="left:1130px;top:472px;font-size:12.5px;color:#111">Tools</span>
<div class="ptitle" style="left:1106px;top:495px;width:260px;height:23px"><span class="t">Measurement Info</span></div>
<svg style="left:1328px;top:496px" width="18" height="20" viewBox="0 0 18 20"><path d="M1.5 17.5L5 14" stroke="#555" stroke-width="1.6"/><circle cx="9" cy="11" r="6" fill="#d4d4d4" stroke="#555" stroke-width="1.1"/><circle cx="12.5" cy="7.5" r="4" fill="#e8e8e8" stroke="#555" stroke-width="1.1"/><circle cx="8" cy="10" r="3" fill="#fafafa"/><circle cx="12" cy="7" r="2" fill="#fff"/></svg>
<div style="left:1348px;top:499px;width:16px;height:15px;background:#fff"></div><div style="left:1349px;top:500px;width:14px;height:13px;background:linear-gradient(#c0c0c0,#a8a8a8)"></div>
<svg style="left:1351px;top:502px" width="10" height="10" viewBox="0 0 10 10"><path d="M1.5 1.5L8.5 8.5M8.5 1.5L1.5 8.5" stroke="#fff" stroke-width="2.2"/></svg>
<div style="left:1111px;top:525px;width:23px;height:22px;border-left:1px solid #c8c8c8;border-top:1px solid #c8c8c8;background:#f4f4f4"></div>
<svg style="left:1115px;top:529px" width="14" height="14" viewBox="0 0 14 14"><rect x="1.5" y="1.5" width="11" height="11" fill="#fff" stroke="#111" stroke-width="1.2"/><path d="M3.5 4.5H10.5M3.5 7H10.5M3.5 9.5H10.5M5 3V12" stroke="#111" stroke-width="1"/></svg>
<svg style="left:1140px;top:530px" width="12" height="12" viewBox="0 0 12 12"><path d="M2 2L10 10M10 2L2 10" stroke="#333" stroke-width="2.2"/></svg>
<div style="left:1110px;top:550px;width:252px;height:70px;background:#fff;border:1px solid #a8a8a8"></div>
<div style="left:1344px;top:551px;width:17px;height:68px;background:#f1f1f1"></div>
<div style="left:1349px;top:558px;border-left:4px solid transparent;border-right:4px solid transparent;border-bottom:4px solid #999"></div>
<div style="left:1349px;top:609px;border-left:4px solid transparent;border-right:4px solid transparent;border-top:4px solid #999"></div>
<div style="left:0;top:641px;width:1366px;height:41px;background:#f0f0f0;border-top:1px solid #fff;border-bottom:1px solid #d5d5d5"></div>
<div style="left:3px;top:645px;width:2px;height:36px;background:repeating-linear-gradient(#b0b0b0 0 1px,#fff 1px 2px,transparent 2px 4px)"></div>
<svg style="left:13px;top:655px" width="14" height="14" viewBox="0 0 14 14"><path d="M2 2L12 12M12 2L2 12" stroke="#b5b5b5" stroke-width="2.5"/></svg>
<svg style="left:35px;top:655px" width="16" height="14" viewBox="0 0 16 14"><rect x="0.5" y="0.5" width="15" height="13" fill="#fff" stroke="#aaa"/><path d="M0.5 3.5H15.5M0.5 6.5H15.5M0.5 9.5H15.5M4.5 3.5V13.5M8 3.5V13.5M11.5 3.5V13.5" stroke="#b5b5b5"/></svg>
<div class="sep" style="left:56px;top:648px;height:30px"></div>
<span class="t lbl" style="left:62px">Scale X</span>
<div class="inp" style="left:62px;width:38px"><span class="t">1</span></div>
<div class="spin" style="left:101px"></div>
<div style="left:104px;top:665px;border-left:3px solid transparent;border-right:3px solid transparent;border-bottom:3px solid #aaa"></div>
<div style="left:104px;top:673px;border-left:3px solid transparent;border-right:3px solid transparent;border-top:3px solid #aaa"></div>
<span class="t lbl" style="left:117px">Scale Y</span>
<div class="inp" style="left:117px;width:36px"><span class="t">1</span></div>
<div class="spin" style="left:154px"></div>
<div style="left:157px;top:665px;border-left:3px solid transparent;border-right:3px solid transparent;border-bottom:3px solid #aaa"></div>
<div style="left:157px;top:673px;border-left:3px solid transparent;border-right:3px solid transparent;border-top:3px solid #aaa"></div>
<span class="t lbl" style="left:172px">Size X</span>
<div class="inp" style="left:172px;width:50px"><span class="t">0 mm</span></div>
<span class="t lbl" style="left:227px">Size Y</span>
<div class="inp" style="left:227px;width:50px"><span class="t">0 mm</span></div>
<span class="t lbl" style="left:282px">Pos X</span>
<div class="inp" style="left:282px;width:50px"><span class="t">0 mm</span></div>
<span class="t lbl" style="left:337px">Pos Y</span>
<div class="inp" style="left:337px;width:50px"><span class="t">0 mm</span></div>
<span class="t lbl" style="left:392px">Delta X</span>
<div class="inp" style="left:392px;width:50px"><span class="t">0 mm</span></div>
<span class="t lbl" style="left:447px">Delta Y</span>
<div class="inp" style="left:447px;width:50px"><span class="t">0 mm</span></div>
<span class="t lbl" style="left:502px">Rot</span>
<div class="inp" style="left:502px;width:38px"><span class="t">0</span></div>
<div class="spin" style="left:541px"></div>
<div style="left:544px;top:665px;border-left:3px solid transparent;border-right:3px solid transparent;border-bottom:3px solid #aaa"></div>
<div style="left:544px;top:673px;border-left:3px solid transparent;border-right:3px solid transparent;border-top:3px solid #aaa"></div>
<span class="t lbl" style="left:557px">Delta Dist</span>
<div class="inp" style="left:557px;width:50px"><span class="t">0 mm</span></div>
<span class="t lbl" style="left:612px">Delta Ang</span>
<div class="inp" style="left:612px;width:38px"><span class="t">0</span></div>
<div class="spin" style="left:651px"></div>
<div style="left:654px;top:665px;border-left:3px solid transparent;border-right:3px solid transparent;border-bottom:3px solid #aaa"></div>
<div style="left:654px;top:673px;border-left:3px solid transparent;border-right:3px solid transparent;border-top:3px solid #aaa"></div>
<div style="left:612px;top:645px;width:50px;height:15px;background:#f0f0f0;overflow:hidden"><span class="t lbl" style="left:0;top:3px">Delta Ang</span></div>
<div class="sep" style="left:667px;top:648px;height:30px"></div>
<div class="sep" style="left:739px;top:648px;height:30px"></div>
<div class="sep" style="left:833px;top:648px;height:30px"></div>
<div class="press" style="left:693px;top:651px;width:22px;height:22px"></div>
<div class="press" style="left:743px;top:651px;width:22px;height:22px"></div>
<svg style="left:674px;top:654px" width="16" height="16" viewBox="0 0 16 16"><rect x="1.5" y="8.5" width="6" height="6" fill="#fff" stroke="#333" stroke-width="1.1"/><rect x="3.5" y="10.5" width="2" height="2" fill="none" stroke="#333"/><path d="M4 8V6L8 1.5H15V5H10L8 8" fill="#fff" stroke="#333" stroke-width="1" stroke-dasharray="1.2 0.6"/><path d="M10 3H15" fill="none" stroke="#3a5ab8" stroke-width="1.6" /></svg>
<svg style="left:696px;top:654px" width="16" height="16" viewBox="0 0 16 16"><rect x="1.5" y="1.5" width="7" height="7" fill="#fff" stroke="#222" stroke-width="1.2"/><rect x="3" y="3" width="4" height="4" fill="#e0e0e0"/><path d="M1 15L15 1" fill="none" stroke="#aaa" stroke-width="0.6" /><rect x="8.5" y="8.5" width="6" height="6" fill="none" stroke="#222" stroke-width="1.2"/><path d="M10 11.5H13M11.5 10V13" fill="none" stroke="#222" stroke-width="0.8" /><path d="M9.5 6.5H15" fill="none" stroke="#222" stroke-width="1" /></svg>
<svg style="left:718px;top:654px" width="16" height="16" viewBox="0 0 16 16"><path d="M1.5 14Q1 9 5 8H10Q13 8 13 4V0.5" fill="none" stroke="#333" stroke-width="2.2" /><path d="M1.5 14Q1 9 5 8H10Q13 8 13 4V0.5" fill="none" stroke="#fff" stroke-width="0.9" /><path d="M8 7L9.5 8.5M11 10L14 13M11 13H14V10" fill="none" stroke="#6090d8" stroke-width="1.4" /></svg>
<svg style="left:746px;top:654px" width="16" height="16" viewBox="0 0 16 16"><rect x="0.5" y="0.5" width="15" height="15" fill="#1a6a7a" stroke="#111" stroke-width="1.2"/><path d="M1 1H15V15Z" fill="#10e020" stroke="none" stroke-width="0" /><path d="M1 1L15 15" fill="none" stroke="#fff" stroke-width="1" /><path d="M15 1V15" fill="none" stroke="#111" stroke-width="1" stroke-dasharray="1 1"/></svg>
<svg style="left:768px;top:654px" width="16" height="16" viewBox="0 0 16 16"><path d="M1.5 4V15H14Z" fill="#3a9a8a" stroke="#333" stroke-width="1.1" /><path d="M4 12H11" fill="none" stroke="#aef" stroke-width="0.6" /><rect x="7.5" y="0.5" width="8" height="6" fill="#333"/><text x="7.7" y="6" font-family="Liberation Sans" font-weight="bold" font-size="6" fill="#fff" transform="scale(0.95 1)">WP</text></svg>
<svg style="left:790px;top:654px" width="16" height="16" viewBox="0 0 16 16"><path d="M1.5 2V15H14Z" fill="#30e040" stroke="#333" stroke-width="1.1" stroke-dasharray="1.5 0.8"/><rect x="8.5" y="0.5" width="7" height="6" fill="#333"/><text x="9" y="6" font-family="Liberation Sans" font-weight="bold" font-size="6" fill="#fff">CP</text></svg>
<svg style="left:811px;top:654px" width="16" height="16" viewBox="0 0 16 16"><path d="M0.5 3H8V7H11V10H15V15H7V11H4V8H0.5Z" fill="#a0f0a0" stroke="#333" stroke-width="1.2" stroke-dasharray="2 0.7"/><rect x="11" y="0.5" width="4.5" height="7" fill="#333"/><path d="M12.3 6.5V1.8H14.5M12.3 4H14" fill="none" stroke="#fff" stroke-width="0.9" /></svg>
<svg style="left:840px;top:654px" width="16" height="16" viewBox="0 0 16 16"><path d="M1 5V10H6" fill="#40c040" stroke="#1a6a1a" stroke-width="1" /><path d="M1.5 8L6 3H11Q14 3 14 6V9H10V7H6L5 11Z" fill="#40c040" stroke="#1a6a1a" stroke-width="1" /><path d="M9 7.5V15.5L11 13.5L12.5 16L14 15L12.5 12.5H15Z" fill="#fff" stroke="#222" stroke-width="1" /></svg>
<svg style="left:862px;top:654px" width="16" height="16" viewBox="0 0 16 16"><path d="M2 1H8L6 6Z" fill="#e03030" stroke="#d02020" stroke-width="0.8" /><path d="M14 6L9 14H15Z" fill="#5a8ae0" stroke="#4a7ad8" stroke-width="0.8" /><path d="M1 0.5H9M12 8V15M1 1V5M15 14H9" fill="none" stroke="#f0a0a0" stroke-width="0.8" stroke-dasharray="1 1"/></svg>
<svg style="left:883px;top:654px" width="16" height="16" viewBox="0 0 16 16"><path d="M1.5 13L6 3L10.5 13ZM4 13L8 5L12 13" fill="none" stroke="#333" stroke-width="1.1" stroke-dasharray="2 0.8"/><path d="M6 15L10 7L14.5 15Z" fill="none" stroke="#c02030" stroke-width="1.2" /></svg>
<svg style="left:906px;top:654px" width="16" height="16" viewBox="0 0 16 16"><path d="M1 14V11Q1 8 5 8H11Q15 8 15 11V14Z" fill="#f4f4f4" stroke="#b8b8b8" stroke-width="1.1" /><ellipse cx="8" cy="5" rx="3.5" ry="3.5" fill="#f4f4f4" stroke="#b8b8b8"/><path d="M3 10H13" fill="none" stroke="#c8c8c8" stroke-width="1" /></svg>
<svg style="left:927px;top:654px" width="16" height="16" viewBox="0 0 16 16"><rect x="1.5" y="1.5" width="13" height="13" fill="none" stroke="#a8a8e8" stroke-dasharray="1.5 1"/><rect x="2.5" y="5.5" width="8" height="8" fill="#3030a0"/><circle cx="6.5" cy="9.5" r="2.3" fill="#e8e8f8" stroke="#111"/><path d="M2 14L14 2" fill="none" stroke="#d03040" stroke-width="1.2" /></svg>
<svg style="left:950px;top:654px" width="16" height="16" viewBox="0 0 16 16"><rect x="1.5" y="1.5" width="13" height="13" fill="#f0f0f0" stroke="#b0b0b0" stroke-width="1.1"/><rect x="4" y="4" width="8" height="8" fill="none" stroke="#c0c0c0"/><path d="M4 4L12 12M12 4L4 12" fill="none" stroke="#b8b8b8" stroke-width="1" /></svg>
<svg style="left:971px;top:654px" width="16" height="16" viewBox="0 0 16 16"><rect x="1.5" y="5.5" width="9" height="9" fill="#f4f4f4" stroke="#b0b0b0" stroke-width="1.1"/><rect x="4" y="8" width="4" height="4" fill="none" stroke="#c0c0c0"/><path d="M4 5.5L8 2H12" fill="none" stroke="#b0b0b0" stroke-width="1" /><rect x="13" y="1" width="2" height="2" fill="#b8b8b8"/></svg>
<svg style="left:994px;top:654px" width="16" height="16" viewBox="0 0 16 16"><rect x="1.5" y="5.5" width="9" height="9" fill="#f4f4f4" stroke="#b0b0b0" stroke-width="1.1"/><rect x="4" y="8" width="4" height="4" fill="none" stroke="#c0c0c0"/><path d="M4 5.5L8 2H11" fill="none" stroke="#b0b0b0" stroke-width="1" /><path d="M13.5 1V8M12 2.5L13.5 1L15 2.5M12 6.5L13.5 8L15 6.5" fill="none" stroke="#b0b0b0" stroke-width="1" /></svg>
<svg style="left:1016px;top:654px" width="16" height="16" viewBox="0 0 16 16"><rect x="0.5" y="0.5" width="15" height="15" fill="#c8ccd8" stroke="#8890b0" stroke-dasharray="1.5 0.7"/><rect x="2.5" y="2.5" width="11" height="11" fill="none" stroke="#555"/><rect x="4" y="4" width="8" height="8" fill="#fff" stroke="#333"/><circle cx="8" cy="8" r="2.5" fill="none" stroke="#333"/><path d="M1 15L15 1" fill="none" stroke="#a06080" stroke-width="0.8" /></svg>
<div style="left:0;top:682px;width:1366px;height:26px;background:#f0f0f0;border-top:1px solid #e0e0e0"></div>
<span class="t" style="left:9px;top:688px;font-size:12px;color:#111;letter-spacing:-0.2px">Select object(s)</span>
<span class="t" style="left:887px;top:690px;font-size:12px;color:#111;letter-spacing:-0.4px">SNAP</span>
<span class="t" style="left:925px;top:690px;font-size:12px;color:#111;letter-spacing:-0.4px">GEO</span>
<div style="left:920px;top:684px;width:1px;height:24px;background:#d8d8d8"></div>
<div style="left:951px;top:684px;width:1px;height:24px;background:#d8d8d8"></div>
<div style="left:1248px;top:684px;width:1px;height:24px;background:#d8d8d8"></div>
<div style="left:1302px;top:684px;width:1px;height:24px;background:#d8d8d8"></div>
<svg style="left:968px;top:686px" width="10" height="20" viewBox="0 0 10 20"><rect x="1.5" y="1.5" width="7" height="6" fill="#fff" stroke="#222"/><path d="M7.5 7.5V11" stroke="#222"/></svg>
<span class="t" style="left:969px;top:695px;font-size:11px;color:#222">X</span>
<div style="left:978px;top:687px;width:73px;height:19px;background:#fff;border:1px solid #111"><span class="t" style="left:2px;top:2px;font-size:11px;letter-spacing:0px;color:#111">36,306 mm</span></div>
<svg style="left:1064px;top:686px" width="10" height="20" viewBox="0 0 10 20"><rect x="1.5" y="1.5" width="7" height="6" fill="#fff" stroke="#222"/><path d="M7.5 7.5V11" stroke="#222"/></svg>
<span class="t" style="left:1065px;top:695px;font-size:11px;color:#222">Y</span>
<div style="left:1074px;top:687px;width:73px;height:19px;background:#fff;border:1px solid #111"><span class="t" style="left:2px;top:2px;font-size:11px;letter-spacing:0px;color:#111">169,65 mm</span></div>
<svg style="left:1160px;top:686px" width="10" height="20" viewBox="0 0 10 20"><rect x="1.5" y="1.5" width="7" height="6" fill="#fff" stroke="#222"/><path d="M7.5 7.5V11" stroke="#222"/></svg>
<span class="t" style="left:1161px;top:695px;font-size:11px;color:#222">Z</span>
<div style="left:1170px;top:687px;width:73px;height:19px;background:#fff;border:1px solid #111"><span class="t" style="left:2px;top:2px;font-size:11px;letter-spacing:0px;color:#aaa">0 mm</span></div>
<span class="t" style="left:1252px;top:688px;font-size:12px;color:#111;letter-spacing:-0.3px">482%</span>
<span class="t" style="left:1308px;top:688px;font-size:12px;color:#111;letter-spacing:-0.3px">17:50</span>
</body></html>
